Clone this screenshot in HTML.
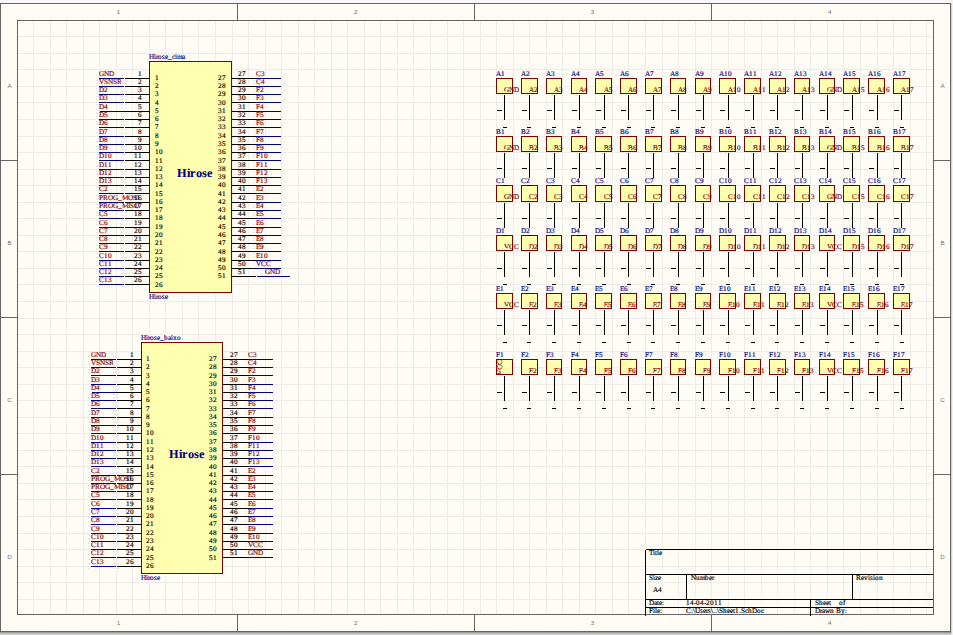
<!DOCTYPE html>
<html><head><meta charset="utf-8"><style>
html,body{margin:0;padding:0;background:#f8f8f8;overflow:hidden}
svg{display:block}
</style></head><body>
<svg width="953" height="635" viewBox="0 0 953 635">
<rect x="0" y="0" width="953" height="635" fill="#f8f8f8"/>
<rect x="0" y="632" width="951" height="1" fill="#9c9c9c"/>
<rect x="0" y="633" width="951" height="1" fill="#bababa"/>
<rect x="0" y="634" width="951" height="1" fill="#cfcfcf"/>
<rect x="951" y="3" width="1" height="632" fill="#d4d4d4"/>
<rect x="952" y="0" width="1" height="635" fill="#f2f2f2"/>
<rect x="0" y="3" width="951" height="629" fill="#fffcf6"/>
<path d="M33.5 21V614 M50.5 21V614 M66.5 21V614 M83.5 21V614 M99.5 21V614 M116.5 21V614 M132.5 21V614 M149.5 21V614 M165.5 21V614 M182.5 21V614 M198.5 21V614 M215.5 21V614 M232.5 21V614 M248.5 21V614 M265.5 21V614 M281.5 21V614 M298.5 21V614 M314.5 21V614 M331.5 21V614 M347.5 21V614 M364.5 21V614 M380.5 21V614 M397.5 21V614 M413.5 21V614 M430.5 21V614 M447.5 21V614 M463.5 21V614 M480.5 21V614 M496.5 21V614 M513.5 21V614 M529.5 21V614 M546.5 21V614 M562.5 21V614 M579.5 21V614 M595.5 21V614 M612.5 21V614 M628.5 21V614 M645.5 21V614 M662.5 21V614 M678.5 21V614 M695.5 21V614 M711.5 21V614 M728.5 21V614 M744.5 21V614 M761.5 21V614 M777.5 21V614 M794.5 21V614 M810.5 21V614 M827.5 21V614 M843.5 21V614 M860.5 21V614 M877.5 21V614 M893.5 21V614 M910.5 21V614 M926.5 21V614 M18 36.5H933 M18 53.5H933 M18 69.5H933 M18 86.5H933 M18 102.5H933 M18 119.5H933 M18 136.5H933 M18 152.5H933 M18 169.5H933 M18 185.5H933 M18 202.5H933 M18 218.5H933 M18 235.5H933 M18 251.5H933 M18 268.5H933 M18 284.5H933 M18 301.5H933 M18 318.5H933 M18 334.5H933 M18 351.5H933 M18 367.5H933 M18 384.5H933 M18 400.5H933 M18 417.5H933 M18 433.5H933 M18 450.5H933 M18 466.5H933 M18 483.5H933 M18 499.5H933 M18 516.5H933 M18 533.5H933 M18 549.5H933 M18 566.5H933 M18 582.5H933 M18 599.5H933" stroke="#edede9" stroke-width="1" fill="none" shape-rendering="crispEdges"/>
<path d="M0.5 3.5H950.5V631.5H0.5Z M17.5 20.5H933.5V614.5H17.5Z M237.5 3.5V20.5 M237.5 614.5V631.5 M474.5 3.5V20.5 M474.5 614.5V631.5 M711.5 3.5V20.5 M711.5 614.5V631.5 M0.5 160.5H17.5 M933.5 160.5H950.5 M0.5 317.5H17.5 M933.5 317.5H950.5 M0.5 474.5H17.5 M933.5 474.5H950.5" stroke="#646464" stroke-width="1" fill="none" shape-rendering="crispEdges"/>
<g font-family="Liberation Sans">
<text x="118.6" y="14" fill="#6e6e7a" font-size="6.2" text-anchor="middle">1</text>
<text x="118.6" y="624.8" fill="#6e6e7a" font-size="6.2" text-anchor="middle">1</text>
<text x="355.8" y="14" fill="#6e6e7a" font-size="6.2" text-anchor="middle">2</text>
<text x="355.8" y="624.8" fill="#6e6e7a" font-size="6.2" text-anchor="middle">2</text>
<text x="592.6" y="14" fill="#6e6e7a" font-size="6.2" text-anchor="middle">3</text>
<text x="592.6" y="624.8" fill="#6e6e7a" font-size="6.2" text-anchor="middle">3</text>
<text x="829.8" y="14" fill="#6e6e7a" font-size="6.2" text-anchor="middle">4</text>
<text x="829.8" y="624.8" fill="#6e6e7a" font-size="6.2" text-anchor="middle">4</text>
<text x="9.5" y="88" fill="#6e6e7a" font-size="6.2" text-anchor="middle">A</text>
<text x="942.5" y="88" fill="#6e6e7a" font-size="6.2" text-anchor="middle">A</text>
<text x="9.5" y="245" fill="#6e6e7a" font-size="6.2" text-anchor="middle">B</text>
<text x="942.5" y="245" fill="#6e6e7a" font-size="6.2" text-anchor="middle">B</text>
<text x="9.5" y="402" fill="#6e6e7a" font-size="6.2" text-anchor="middle">C</text>
<text x="942.5" y="402" fill="#6e6e7a" font-size="6.2" text-anchor="middle">C</text>
<text x="9.5" y="559" fill="#6e6e7a" font-size="6.2" text-anchor="middle">D</text>
<text x="942.5" y="559" fill="#6e6e7a" font-size="6.2" text-anchor="middle">D</text>
</g>
<g font-family="Liberation Serif" text-rendering="geometricPrecision">
<rect x="149.5" y="61.5" width="82" height="231" fill="#ffffb0" stroke="#800000" stroke-width="1" shape-rendering="crispEdges"/>
<text x="99 104 109" y="76" fill="#800000" stroke="#800000" stroke-width="0.16" font-size="7.2">GND</text>
<text x="138" y="76" fill="#000" stroke="#000" stroke-width="0.16" font-size="7.2">1</text>
<text x="155" y="80" fill="#000" stroke="#000" stroke-width="0.16" font-size="7.2">1</text>
<text x="99 104 108 113 117" y="84" fill="#800000" stroke="#800000" stroke-width="0.16" font-size="7.2">VSNSR</text>
<text x="138" y="84" fill="#000" stroke="#000" stroke-width="0.16" font-size="7.2">2</text>
<text x="155" y="88" fill="#000" stroke="#000" stroke-width="0.16" font-size="7.2">2</text>
<text x="99 104" y="92" fill="#800000" stroke="#800000" stroke-width="0.16" font-size="7.2">D2</text>
<text x="138" y="92" fill="#000" stroke="#000" stroke-width="0.16" font-size="7.2">3</text>
<text x="155" y="96" fill="#000" stroke="#000" stroke-width="0.16" font-size="7.2">3</text>
<text x="99 104" y="100" fill="#800000" stroke="#800000" stroke-width="0.16" font-size="7.2">D3</text>
<text x="138" y="100" fill="#000" stroke="#000" stroke-width="0.16" font-size="7.2">4</text>
<text x="155" y="105" fill="#000" stroke="#000" stroke-width="0.16" font-size="7.2">4</text>
<text x="99 104" y="109" fill="#800000" stroke="#800000" stroke-width="0.16" font-size="7.2">D4</text>
<text x="138" y="109" fill="#000" stroke="#000" stroke-width="0.16" font-size="7.2">5</text>
<text x="155" y="113" fill="#000" stroke="#000" stroke-width="0.16" font-size="7.2">5</text>
<text x="99 104" y="117" fill="#800000" stroke="#800000" stroke-width="0.16" font-size="7.2">D5</text>
<text x="138" y="117" fill="#000" stroke="#000" stroke-width="0.16" font-size="7.2">6</text>
<text x="155" y="121" fill="#000" stroke="#000" stroke-width="0.16" font-size="7.2">6</text>
<text x="99 104" y="125" fill="#800000" stroke="#800000" stroke-width="0.16" font-size="7.2">D6</text>
<text x="138" y="125" fill="#000" stroke="#000" stroke-width="0.16" font-size="7.2">7</text>
<text x="155" y="129" fill="#000" stroke="#000" stroke-width="0.16" font-size="7.2">7</text>
<text x="99 104" y="134" fill="#800000" stroke="#800000" stroke-width="0.16" font-size="7.2">D7</text>
<text x="138" y="134" fill="#000" stroke="#000" stroke-width="0.16" font-size="7.2">8</text>
<text x="155" y="138" fill="#000" stroke="#000" stroke-width="0.16" font-size="7.2">8</text>
<text x="99 104" y="142" fill="#800000" stroke="#800000" stroke-width="0.16" font-size="7.2">D8</text>
<text x="138" y="142" fill="#000" stroke="#000" stroke-width="0.16" font-size="7.2">9</text>
<text x="155" y="146" fill="#000" stroke="#000" stroke-width="0.16" font-size="7.2">9</text>
<text x="99 104" y="150" fill="#800000" stroke="#800000" stroke-width="0.16" font-size="7.2">D9</text>
<text x="134 138" y="150" fill="#000" stroke="#000" stroke-width="0.16" font-size="7.2">10</text>
<text x="155 159" y="154" fill="#000" stroke="#000" stroke-width="0.16" font-size="7.2">10</text>
<text x="99 104 108" y="158" fill="#800000" stroke="#800000" stroke-width="0.16" font-size="7.2">D10</text>
<text x="134 138" y="158" fill="#000" stroke="#000" stroke-width="0.16" font-size="7.2">11</text>
<text x="155 159" y="163" fill="#000" stroke="#000" stroke-width="0.16" font-size="7.2">11</text>
<text x="99 104 108" y="167" fill="#800000" stroke="#800000" stroke-width="0.16" font-size="7.2">D11</text>
<text x="134 138" y="167" fill="#000" stroke="#000" stroke-width="0.16" font-size="7.2">12</text>
<text x="155 159" y="171" fill="#000" stroke="#000" stroke-width="0.16" font-size="7.2">12</text>
<text x="99 104 108" y="175" fill="#800000" stroke="#800000" stroke-width="0.16" font-size="7.2">D12</text>
<text x="134 138" y="175" fill="#000" stroke="#000" stroke-width="0.16" font-size="7.2">13</text>
<text x="155 159" y="179" fill="#000" stroke="#000" stroke-width="0.16" font-size="7.2">13</text>
<text x="99 104 108" y="183" fill="#800000" stroke="#800000" stroke-width="0.16" font-size="7.2">D13</text>
<text x="134 138" y="183" fill="#000" stroke="#000" stroke-width="0.16" font-size="7.2">14</text>
<text x="155 159" y="187" fill="#000" stroke="#000" stroke-width="0.16" font-size="7.2">14</text>
<text x="99 104" y="191" fill="#800000" stroke="#800000" stroke-width="0.16" font-size="7.2">C2</text>
<text x="134 138" y="191" fill="#000" stroke="#000" stroke-width="0.16" font-size="7.2">15</text>
<text x="155 159" y="196" fill="#000" stroke="#000" stroke-width="0.16" font-size="7.2">15</text>
<text x="99 103 108 113 118 122 128 133 137" y="200" fill="#800000" stroke="#800000" stroke-width="0.16" font-size="7.2">PROG_MOSI</text>
<text x="134 138" y="200" fill="#000" stroke="#000" stroke-width="0.16" font-size="7.2">16</text>
<text x="155 159" y="204" fill="#000" stroke="#000" stroke-width="0.16" font-size="7.2">16</text>
<text x="99 103 108 113 118 122 128 130 134" y="208" fill="#800000" stroke="#800000" stroke-width="0.16" font-size="7.2">PROG_MISO</text>
<text x="134 138" y="208" fill="#000" stroke="#000" stroke-width="0.16" font-size="7.2">17</text>
<text x="155 159" y="212" fill="#000" stroke="#000" stroke-width="0.16" font-size="7.2">17</text>
<text x="99 104" y="216" fill="#800000" stroke="#800000" stroke-width="0.16" font-size="7.2">C5</text>
<text x="134 138" y="216" fill="#000" stroke="#000" stroke-width="0.16" font-size="7.2">18</text>
<text x="155 159" y="220" fill="#000" stroke="#000" stroke-width="0.16" font-size="7.2">18</text>
<text x="99 104" y="225" fill="#800000" stroke="#800000" stroke-width="0.16" font-size="7.2">C6</text>
<text x="134 138" y="225" fill="#000" stroke="#000" stroke-width="0.16" font-size="7.2">19</text>
<text x="155 159" y="229" fill="#000" stroke="#000" stroke-width="0.16" font-size="7.2">19</text>
<text x="99 104" y="233" fill="#800000" stroke="#800000" stroke-width="0.16" font-size="7.2">C7</text>
<text x="134 138" y="233" fill="#000" stroke="#000" stroke-width="0.16" font-size="7.2">20</text>
<text x="155 159" y="237" fill="#000" stroke="#000" stroke-width="0.16" font-size="7.2">20</text>
<text x="99 104" y="241" fill="#800000" stroke="#800000" stroke-width="0.16" font-size="7.2">C8</text>
<text x="134 138" y="241" fill="#000" stroke="#000" stroke-width="0.16" font-size="7.2">21</text>
<text x="155 159" y="245" fill="#000" stroke="#000" stroke-width="0.16" font-size="7.2">21</text>
<text x="99 104" y="249" fill="#800000" stroke="#800000" stroke-width="0.16" font-size="7.2">C9</text>
<text x="134 138" y="249" fill="#000" stroke="#000" stroke-width="0.16" font-size="7.2">22</text>
<text x="155 159" y="254" fill="#000" stroke="#000" stroke-width="0.16" font-size="7.2">22</text>
<text x="99 104 108" y="258" fill="#800000" stroke="#800000" stroke-width="0.16" font-size="7.2">C10</text>
<text x="134 138" y="258" fill="#000" stroke="#000" stroke-width="0.16" font-size="7.2">23</text>
<text x="155 159" y="262" fill="#000" stroke="#000" stroke-width="0.16" font-size="7.2">23</text>
<text x="99 104 108" y="266" fill="#800000" stroke="#800000" stroke-width="0.16" font-size="7.2">C11</text>
<text x="134 138" y="266" fill="#000" stroke="#000" stroke-width="0.16" font-size="7.2">24</text>
<text x="155 159" y="270" fill="#000" stroke="#000" stroke-width="0.16" font-size="7.2">24</text>
<text x="99 104 108" y="274" fill="#800000" stroke="#800000" stroke-width="0.16" font-size="7.2">C12</text>
<text x="134 138" y="274" fill="#000" stroke="#000" stroke-width="0.16" font-size="7.2">25</text>
<text x="155 159" y="278" fill="#000" stroke="#000" stroke-width="0.16" font-size="7.2">25</text>
<text x="99 104 108" y="282" fill="#800000" stroke="#800000" stroke-width="0.16" font-size="7.2">C13</text>
<text x="134 138" y="282" fill="#000" stroke="#000" stroke-width="0.16" font-size="7.2">26</text>
<text x="155 159" y="287" fill="#000" stroke="#000" stroke-width="0.16" font-size="7.2">26</text>
<text x="256 261" y="76" fill="#800000" stroke="#800000" stroke-width="0.16" font-size="7.2">C3</text>
<text x="238 242" y="76" fill="#000" stroke="#000" stroke-width="0.16" font-size="7.2">27</text>
<text x="218 222" y="80" fill="#000" stroke="#000" stroke-width="0.16" font-size="7.2">27</text>
<text x="256 261" y="84" fill="#800000" stroke="#800000" stroke-width="0.16" font-size="7.2">C4</text>
<text x="238 242" y="84" fill="#000" stroke="#000" stroke-width="0.16" font-size="7.2">28</text>
<text x="218 222" y="88" fill="#000" stroke="#000" stroke-width="0.16" font-size="7.2">28</text>
<text x="256 260" y="92" fill="#800000" stroke="#800000" stroke-width="0.16" font-size="7.2">F2</text>
<text x="238 242" y="92" fill="#000" stroke="#000" stroke-width="0.16" font-size="7.2">29</text>
<text x="218 222" y="96" fill="#000" stroke="#000" stroke-width="0.16" font-size="7.2">29</text>
<text x="256 260" y="100" fill="#800000" stroke="#800000" stroke-width="0.16" font-size="7.2">F3</text>
<text x="238 242" y="100" fill="#000" stroke="#000" stroke-width="0.16" font-size="7.2">30</text>
<text x="218 222" y="105" fill="#000" stroke="#000" stroke-width="0.16" font-size="7.2">30</text>
<text x="256 260" y="109" fill="#800000" stroke="#800000" stroke-width="0.16" font-size="7.2">F4</text>
<text x="238 242" y="109" fill="#000" stroke="#000" stroke-width="0.16" font-size="7.2">31</text>
<text x="218 222" y="113" fill="#000" stroke="#000" stroke-width="0.16" font-size="7.2">31</text>
<text x="256 260" y="117" fill="#800000" stroke="#800000" stroke-width="0.16" font-size="7.2">F5</text>
<text x="238 242" y="117" fill="#000" stroke="#000" stroke-width="0.16" font-size="7.2">32</text>
<text x="218 222" y="121" fill="#000" stroke="#000" stroke-width="0.16" font-size="7.2">32</text>
<text x="256 260" y="125" fill="#800000" stroke="#800000" stroke-width="0.16" font-size="7.2">F6</text>
<text x="238 242" y="125" fill="#000" stroke="#000" stroke-width="0.16" font-size="7.2">33</text>
<text x="218 222" y="129" fill="#000" stroke="#000" stroke-width="0.16" font-size="7.2">33</text>
<text x="256 260" y="134" fill="#800000" stroke="#800000" stroke-width="0.16" font-size="7.2">F7</text>
<text x="238 242" y="134" fill="#000" stroke="#000" stroke-width="0.16" font-size="7.2">34</text>
<text x="218 222" y="138" fill="#000" stroke="#000" stroke-width="0.16" font-size="7.2">34</text>
<text x="256 260" y="142" fill="#800000" stroke="#800000" stroke-width="0.16" font-size="7.2">F8</text>
<text x="238 242" y="142" fill="#000" stroke="#000" stroke-width="0.16" font-size="7.2">35</text>
<text x="218 222" y="146" fill="#000" stroke="#000" stroke-width="0.16" font-size="7.2">35</text>
<text x="256 260" y="150" fill="#800000" stroke="#800000" stroke-width="0.16" font-size="7.2">F9</text>
<text x="238 242" y="150" fill="#000" stroke="#000" stroke-width="0.16" font-size="7.2">36</text>
<text x="218 222" y="154" fill="#000" stroke="#000" stroke-width="0.16" font-size="7.2">36</text>
<text x="256 260 264" y="158" fill="#800000" stroke="#800000" stroke-width="0.16" font-size="7.2">F10</text>
<text x="238 242" y="158" fill="#000" stroke="#000" stroke-width="0.16" font-size="7.2">37</text>
<text x="218 222" y="163" fill="#000" stroke="#000" stroke-width="0.16" font-size="7.2">37</text>
<text x="256 260 264" y="167" fill="#800000" stroke="#800000" stroke-width="0.16" font-size="7.2">F11</text>
<text x="238 242" y="167" fill="#000" stroke="#000" stroke-width="0.16" font-size="7.2">38</text>
<text x="218 222" y="171" fill="#000" stroke="#000" stroke-width="0.16" font-size="7.2">38</text>
<text x="256 260 264" y="175" fill="#800000" stroke="#800000" stroke-width="0.16" font-size="7.2">F12</text>
<text x="238 242" y="175" fill="#000" stroke="#000" stroke-width="0.16" font-size="7.2">39</text>
<text x="218 222" y="179" fill="#000" stroke="#000" stroke-width="0.16" font-size="7.2">39</text>
<text x="256 260 264" y="183" fill="#800000" stroke="#800000" stroke-width="0.16" font-size="7.2">F13</text>
<text x="238 242" y="183" fill="#000" stroke="#000" stroke-width="0.16" font-size="7.2">40</text>
<text x="218 222" y="187" fill="#000" stroke="#000" stroke-width="0.16" font-size="7.2">40</text>
<text x="256 260" y="191" fill="#800000" stroke="#800000" stroke-width="0.16" font-size="7.2">E2</text>
<text x="238 242" y="191" fill="#000" stroke="#000" stroke-width="0.16" font-size="7.2">41</text>
<text x="218 222" y="196" fill="#000" stroke="#000" stroke-width="0.16" font-size="7.2">41</text>
<text x="256 260" y="200" fill="#800000" stroke="#800000" stroke-width="0.16" font-size="7.2">E3</text>
<text x="238 242" y="200" fill="#000" stroke="#000" stroke-width="0.16" font-size="7.2">42</text>
<text x="218 222" y="204" fill="#000" stroke="#000" stroke-width="0.16" font-size="7.2">42</text>
<text x="256 260" y="208" fill="#800000" stroke="#800000" stroke-width="0.16" font-size="7.2">E4</text>
<text x="238 242" y="208" fill="#000" stroke="#000" stroke-width="0.16" font-size="7.2">43</text>
<text x="218 222" y="212" fill="#000" stroke="#000" stroke-width="0.16" font-size="7.2">43</text>
<text x="256 260" y="216" fill="#800000" stroke="#800000" stroke-width="0.16" font-size="7.2">E5</text>
<text x="238 242" y="216" fill="#000" stroke="#000" stroke-width="0.16" font-size="7.2">44</text>
<text x="218 222" y="220" fill="#000" stroke="#000" stroke-width="0.16" font-size="7.2">44</text>
<text x="256 260" y="225" fill="#800000" stroke="#800000" stroke-width="0.16" font-size="7.2">E6</text>
<text x="238 242" y="225" fill="#000" stroke="#000" stroke-width="0.16" font-size="7.2">45</text>
<text x="218 222" y="229" fill="#000" stroke="#000" stroke-width="0.16" font-size="7.2">45</text>
<text x="256 260" y="233" fill="#800000" stroke="#800000" stroke-width="0.16" font-size="7.2">E7</text>
<text x="238 242" y="233" fill="#000" stroke="#000" stroke-width="0.16" font-size="7.2">46</text>
<text x="218 222" y="237" fill="#000" stroke="#000" stroke-width="0.16" font-size="7.2">46</text>
<text x="256 260" y="241" fill="#800000" stroke="#800000" stroke-width="0.16" font-size="7.2">E8</text>
<text x="238 242" y="241" fill="#000" stroke="#000" stroke-width="0.16" font-size="7.2">47</text>
<text x="218 222" y="245" fill="#000" stroke="#000" stroke-width="0.16" font-size="7.2">47</text>
<text x="256 260" y="249" fill="#800000" stroke="#800000" stroke-width="0.16" font-size="7.2">E9</text>
<text x="238 242" y="249" fill="#000" stroke="#000" stroke-width="0.16" font-size="7.2">48</text>
<text x="218 222" y="254" fill="#000" stroke="#000" stroke-width="0.16" font-size="7.2">48</text>
<text x="256 260 264" y="258" fill="#800000" stroke="#800000" stroke-width="0.16" font-size="7.2">E10</text>
<text x="238 242" y="258" fill="#000" stroke="#000" stroke-width="0.16" font-size="7.2">49</text>
<text x="218 222" y="262" fill="#000" stroke="#000" stroke-width="0.16" font-size="7.2">49</text>
<text x="256 261 266" y="266" fill="#800000" stroke="#800000" stroke-width="0.16" font-size="7.2">VCC</text>
<text x="238 242" y="266" fill="#000" stroke="#000" stroke-width="0.16" font-size="7.2">50</text>
<text x="218 222" y="270" fill="#000" stroke="#000" stroke-width="0.16" font-size="7.2">50</text>
<text x="265 270 275" y="274" fill="#800000" stroke="#800000" stroke-width="0.16" font-size="7.2">GND</text>
<text x="238 242" y="274" fill="#000" stroke="#000" stroke-width="0.16" font-size="7.2">51</text>
<text x="218 222" y="278" fill="#000" stroke="#000" stroke-width="0.16" font-size="7.2">51</text>
<path d="M96 75h2v1h-2z M96 80h2v1h-2z M121 75h2v1h-2z M121 80h2v1h-2z M125 75h2v1h-2z M125 80h2v1h-2z M253 75h2v1h-2z M253 80h2v1h-2z M96 83h2v1h-2z M96 88h2v1h-2z M121 83h2v1h-2z M121 88h2v1h-2z M125 83h2v1h-2z M125 88h2v1h-2z M253 83h2v1h-2z M253 88h2v1h-2z M96 91h2v1h-2z M96 96h2v1h-2z M121 91h2v1h-2z M121 96h2v1h-2z M125 91h2v1h-2z M125 96h2v1h-2z M253 91h2v1h-2z M253 96h2v1h-2z M96 99h2v1h-2z M96 104h2v1h-2z M121 99h2v1h-2z M121 104h2v1h-2z M125 99h2v1h-2z M125 104h2v1h-2z M253 99h2v1h-2z M253 104h2v1h-2z M96 108h2v1h-2z M96 113h2v1h-2z M121 108h2v1h-2z M121 113h2v1h-2z M125 108h2v1h-2z M125 113h2v1h-2z M253 108h2v1h-2z M253 113h2v1h-2z M96 116h2v1h-2z M96 121h2v1h-2z M121 116h2v1h-2z M121 121h2v1h-2z M125 116h2v1h-2z M125 121h2v1h-2z M253 116h2v1h-2z M253 121h2v1h-2z M96 124h2v1h-2z M96 129h2v1h-2z M121 124h2v1h-2z M121 129h2v1h-2z M125 124h2v1h-2z M125 129h2v1h-2z M253 124h2v1h-2z M253 129h2v1h-2z M96 133h2v1h-2z M96 138h2v1h-2z M121 133h2v1h-2z M121 138h2v1h-2z M125 133h2v1h-2z M125 138h2v1h-2z M253 133h2v1h-2z M253 138h2v1h-2z M96 141h2v1h-2z M96 146h2v1h-2z M121 141h2v1h-2z M121 146h2v1h-2z M125 141h2v1h-2z M125 146h2v1h-2z M253 141h2v1h-2z M253 146h2v1h-2z M96 149h2v1h-2z M96 154h2v1h-2z M121 149h2v1h-2z M121 154h2v1h-2z M125 149h2v1h-2z M125 154h2v1h-2z M253 149h2v1h-2z M253 154h2v1h-2z M96 157h2v1h-2z M96 162h2v1h-2z M121 157h2v1h-2z M121 162h2v1h-2z M125 157h2v1h-2z M125 162h2v1h-2z M253 157h2v1h-2z M253 162h2v1h-2z M96 166h2v1h-2z M96 171h2v1h-2z M121 166h2v1h-2z M121 171h2v1h-2z M125 166h2v1h-2z M125 171h2v1h-2z M253 166h2v1h-2z M253 171h2v1h-2z M96 174h2v1h-2z M96 179h2v1h-2z M121 174h2v1h-2z M121 179h2v1h-2z M125 174h2v1h-2z M125 179h2v1h-2z M253 174h2v1h-2z M253 179h2v1h-2z M96 182h2v1h-2z M96 187h2v1h-2z M121 182h2v1h-2z M121 187h2v1h-2z M125 182h2v1h-2z M125 187h2v1h-2z M253 182h2v1h-2z M253 187h2v1h-2z M96 190h2v1h-2z M96 195h2v1h-2z M121 190h2v1h-2z M121 195h2v1h-2z M125 190h2v1h-2z M125 195h2v1h-2z M253 190h2v1h-2z M253 195h2v1h-2z M96 199h2v1h-2z M96 204h2v1h-2z M121 199h2v1h-2z M121 204h2v1h-2z M125 199h2v1h-2z M125 204h2v1h-2z M253 199h2v1h-2z M253 204h2v1h-2z M96 207h2v1h-2z M96 212h2v1h-2z M121 207h2v1h-2z M121 212h2v1h-2z M125 207h2v1h-2z M125 212h2v1h-2z M253 207h2v1h-2z M253 212h2v1h-2z M96 215h2v1h-2z M96 220h2v1h-2z M121 215h2v1h-2z M121 220h2v1h-2z M125 215h2v1h-2z M125 220h2v1h-2z M253 215h2v1h-2z M253 220h2v1h-2z M96 224h2v1h-2z M96 229h2v1h-2z M121 224h2v1h-2z M121 229h2v1h-2z M125 224h2v1h-2z M125 229h2v1h-2z M253 224h2v1h-2z M253 229h2v1h-2z M96 232h2v1h-2z M96 237h2v1h-2z M121 232h2v1h-2z M121 237h2v1h-2z M125 232h2v1h-2z M125 237h2v1h-2z M253 232h2v1h-2z M253 237h2v1h-2z M96 240h2v1h-2z M96 245h2v1h-2z M121 240h2v1h-2z M121 245h2v1h-2z M125 240h2v1h-2z M125 245h2v1h-2z M253 240h2v1h-2z M253 245h2v1h-2z M96 248h2v1h-2z M96 253h2v1h-2z M121 248h2v1h-2z M121 253h2v1h-2z M125 248h2v1h-2z M125 253h2v1h-2z M253 248h2v1h-2z M253 253h2v1h-2z M96 257h2v1h-2z M96 262h2v1h-2z M121 257h2v1h-2z M121 262h2v1h-2z M125 257h2v1h-2z M125 262h2v1h-2z M253 257h2v1h-2z M253 262h2v1h-2z M96 265h2v1h-2z M96 270h2v1h-2z M121 265h2v1h-2z M121 270h2v1h-2z M125 265h2v1h-2z M125 270h2v1h-2z M253 265h2v1h-2z M253 270h2v1h-2z M96 273h2v1h-2z M96 278h2v1h-2z M121 273h2v1h-2z M121 278h2v1h-2z M125 273h2v1h-2z M125 278h2v1h-2z M253 273h2v1h-2z M253 278h2v1h-2z M96 281h2v1h-2z M96 286h2v1h-2z M121 281h2v1h-2z M121 286h2v1h-2z M125 281h2v1h-2z M125 286h2v1h-2z" fill="#e0e8f4"/>
<path d="M99 78.5H124 M99 86.5H124 M99 94.5H124 M99 102.5H124 M100 111.5H125 M99 119.5H124 M99 127.5H124 M99 136.5H124 M99 144.5H124 M99 152.5H124 M99 160.5H124 M99 169.5H124 M99 177.5H124 M99 185.5H124 M99 193.5H124 M99 202.5H124 M99 210.5H124 M99 218.5H124 M99 227.5H124 M99 235.5H124 M99 243.5H124 M99 251.5H124 M99 260.5H124 M99 268.5H124 M99 276.5H124 M99 284.5H124 M256 78.5H281 M256 86.5H281 M256 94.5H281 M256 102.5H281 M256 111.5H281 M256 119.5H281 M256 127.5H281 M256 136.5H281 M256 144.5H281 M256 152.5H281 M256 160.5H281 M256 169.5H281 M256 177.5H281 M256 185.5H281 M256 193.5H281 M256 202.5H281 M256 210.5H281 M256 218.5H281 M256 227.5H281 M256 235.5H281 M256 243.5H281 M256 251.5H281 M256 260.5H281 M256 268.5H281 M257 276.5H290" stroke="#000080" stroke-width="1" fill="none" shape-rendering="crispEdges"/>
<path d="M125 78.5H149.5 M125 86.5H149.5 M125 94.5H149.5 M125 102.5H149.5 M125 111.5H149.5 M125 119.5H149.5 M125 127.5H149.5 M125 136.5H149.5 M125 144.5H149.5 M125 152.5H149.5 M125 160.5H149.5 M125 169.5H149.5 M125 177.5H149.5 M125 185.5H149.5 M125 193.5H149.5 M125 202.5H149.5 M125 210.5H149.5 M125 218.5H149.5 M125 227.5H149.5 M125 235.5H149.5 M125 243.5H149.5 M125 251.5H149.5 M125 260.5H149.5 M125 268.5H149.5 M125 276.5H149.5 M125 284.5H149.5 M231.5 78.5H256 M231.5 86.5H256 M231.5 94.5H256 M231.5 102.5H256 M231.5 111.5H256 M231.5 119.5H256 M231.5 127.5H256 M231.5 136.5H256 M231.5 144.5H256 M231.5 152.5H256 M231.5 160.5H256 M231.5 169.5H256 M231.5 177.5H256 M231.5 185.5H256 M231.5 193.5H256 M231.5 202.5H256 M231.5 210.5H256 M231.5 218.5H256 M231.5 227.5H256 M231.5 235.5H256 M231.5 243.5H256 M231.5 251.5H256 M231.5 260.5H256 M231.5 268.5H256 M231.5 276.5H256" stroke="#000" stroke-width="1" fill="none" shape-rendering="crispEdges"/>
<text x="177 187 190 196 202 207" y="177" fill="#000080" stroke="#000080" stroke-width="0.1" font-size="12.3" font-weight="bold">Hirose</text>
<text x="149 154 156 158 162 165 168 172 175 177 182" y="58.7" fill="#000080" stroke="#000080" stroke-width="0.16" font-size="7.2">Hirose_cima</text>
<text x="149 154 156 158 162 165" y="299" fill="#000080" stroke="#000080" stroke-width="0.16" font-size="7.2">Hirose</text>
<rect x="141.5" y="342.5" width="81" height="231" fill="#ffffb0" stroke="#800000" stroke-width="1" shape-rendering="crispEdges"/>
<text x="91 96 101" y="357" fill="#800000" stroke="#800000" stroke-width="0.16" font-size="7.2">GND</text>
<text x="130" y="357" fill="#000" stroke="#000" stroke-width="0.16" font-size="7.2">1</text>
<text x="146" y="361" fill="#000" stroke="#000" stroke-width="0.16" font-size="7.2">1</text>
<text x="91 96 100 105 109" y="365" fill="#800000" stroke="#800000" stroke-width="0.16" font-size="7.2">VSNSR</text>
<text x="130" y="365" fill="#000" stroke="#000" stroke-width="0.16" font-size="7.2">2</text>
<text x="146" y="369" fill="#000" stroke="#000" stroke-width="0.16" font-size="7.2">2</text>
<text x="91 96" y="373" fill="#800000" stroke="#800000" stroke-width="0.16" font-size="7.2">D2</text>
<text x="130" y="373" fill="#000" stroke="#000" stroke-width="0.16" font-size="7.2">3</text>
<text x="146" y="378" fill="#000" stroke="#000" stroke-width="0.16" font-size="7.2">3</text>
<text x="91 96" y="382" fill="#800000" stroke="#800000" stroke-width="0.16" font-size="7.2">D3</text>
<text x="130" y="382" fill="#000" stroke="#000" stroke-width="0.16" font-size="7.2">4</text>
<text x="146" y="386" fill="#000" stroke="#000" stroke-width="0.16" font-size="7.2">4</text>
<text x="91 96" y="390" fill="#800000" stroke="#800000" stroke-width="0.16" font-size="7.2">D4</text>
<text x="130" y="390" fill="#000" stroke="#000" stroke-width="0.16" font-size="7.2">5</text>
<text x="146" y="394" fill="#000" stroke="#000" stroke-width="0.16" font-size="7.2">5</text>
<text x="91 96" y="398" fill="#800000" stroke="#800000" stroke-width="0.16" font-size="7.2">D5</text>
<text x="130" y="398" fill="#000" stroke="#000" stroke-width="0.16" font-size="7.2">6</text>
<text x="146" y="402" fill="#000" stroke="#000" stroke-width="0.16" font-size="7.2">6</text>
<text x="91 96" y="406" fill="#800000" stroke="#800000" stroke-width="0.16" font-size="7.2">D6</text>
<text x="130" y="406" fill="#000" stroke="#000" stroke-width="0.16" font-size="7.2">7</text>
<text x="146" y="411" fill="#000" stroke="#000" stroke-width="0.16" font-size="7.2">7</text>
<text x="91 96" y="415" fill="#800000" stroke="#800000" stroke-width="0.16" font-size="7.2">D7</text>
<text x="130" y="415" fill="#000" stroke="#000" stroke-width="0.16" font-size="7.2">8</text>
<text x="146" y="419" fill="#000" stroke="#000" stroke-width="0.16" font-size="7.2">8</text>
<text x="91 96" y="423" fill="#800000" stroke="#800000" stroke-width="0.16" font-size="7.2">D8</text>
<text x="130" y="423" fill="#000" stroke="#000" stroke-width="0.16" font-size="7.2">9</text>
<text x="146" y="427" fill="#000" stroke="#000" stroke-width="0.16" font-size="7.2">9</text>
<text x="91 96" y="431" fill="#800000" stroke="#800000" stroke-width="0.16" font-size="7.2">D9</text>
<text x="126 130" y="431" fill="#000" stroke="#000" stroke-width="0.16" font-size="7.2">10</text>
<text x="146 150" y="435" fill="#000" stroke="#000" stroke-width="0.16" font-size="7.2">10</text>
<text x="91 96 100" y="440" fill="#800000" stroke="#800000" stroke-width="0.16" font-size="7.2">D10</text>
<text x="126 130" y="440" fill="#000" stroke="#000" stroke-width="0.16" font-size="7.2">11</text>
<text x="146 150" y="444" fill="#000" stroke="#000" stroke-width="0.16" font-size="7.2">11</text>
<text x="91 96 100" y="448" fill="#800000" stroke="#800000" stroke-width="0.16" font-size="7.2">D11</text>
<text x="126 130" y="448" fill="#000" stroke="#000" stroke-width="0.16" font-size="7.2">12</text>
<text x="146 150" y="452" fill="#000" stroke="#000" stroke-width="0.16" font-size="7.2">12</text>
<text x="91 96 100" y="456" fill="#800000" stroke="#800000" stroke-width="0.16" font-size="7.2">D12</text>
<text x="126 130" y="456" fill="#000" stroke="#000" stroke-width="0.16" font-size="7.2">13</text>
<text x="146 150" y="460" fill="#000" stroke="#000" stroke-width="0.16" font-size="7.2">13</text>
<text x="91 96 100" y="464" fill="#800000" stroke="#800000" stroke-width="0.16" font-size="7.2">D13</text>
<text x="126 130" y="464" fill="#000" stroke="#000" stroke-width="0.16" font-size="7.2">14</text>
<text x="146 150" y="469" fill="#000" stroke="#000" stroke-width="0.16" font-size="7.2">14</text>
<text x="91 96" y="473" fill="#800000" stroke="#800000" stroke-width="0.16" font-size="7.2">C2</text>
<text x="126 130" y="473" fill="#000" stroke="#000" stroke-width="0.16" font-size="7.2">15</text>
<text x="146 150" y="477" fill="#000" stroke="#000" stroke-width="0.16" font-size="7.2">15</text>
<text x="91 95 100 105 110 114 120 125 129" y="481" fill="#800000" stroke="#800000" stroke-width="0.16" font-size="7.2">PROG_MOSI</text>
<text x="126 130" y="481" fill="#000" stroke="#000" stroke-width="0.16" font-size="7.2">16</text>
<text x="146 150" y="485" fill="#000" stroke="#000" stroke-width="0.16" font-size="7.2">16</text>
<text x="91 95 100 105 110 114 120 122 126" y="489" fill="#800000" stroke="#800000" stroke-width="0.16" font-size="7.2">PROG_MISO</text>
<text x="126 130" y="489" fill="#000" stroke="#000" stroke-width="0.16" font-size="7.2">17</text>
<text x="146 150" y="493" fill="#000" stroke="#000" stroke-width="0.16" font-size="7.2">17</text>
<text x="91 96" y="497" fill="#800000" stroke="#800000" stroke-width="0.16" font-size="7.2">C5</text>
<text x="126 130" y="497" fill="#000" stroke="#000" stroke-width="0.16" font-size="7.2">18</text>
<text x="146 150" y="502" fill="#000" stroke="#000" stroke-width="0.16" font-size="7.2">18</text>
<text x="91 96" y="506" fill="#800000" stroke="#800000" stroke-width="0.16" font-size="7.2">C6</text>
<text x="126 130" y="506" fill="#000" stroke="#000" stroke-width="0.16" font-size="7.2">19</text>
<text x="146 150" y="510" fill="#000" stroke="#000" stroke-width="0.16" font-size="7.2">19</text>
<text x="91 96" y="514" fill="#800000" stroke="#800000" stroke-width="0.16" font-size="7.2">C7</text>
<text x="126 130" y="514" fill="#000" stroke="#000" stroke-width="0.16" font-size="7.2">20</text>
<text x="146 150" y="518" fill="#000" stroke="#000" stroke-width="0.16" font-size="7.2">20</text>
<text x="91 96" y="522" fill="#800000" stroke="#800000" stroke-width="0.16" font-size="7.2">C8</text>
<text x="126 130" y="522" fill="#000" stroke="#000" stroke-width="0.16" font-size="7.2">21</text>
<text x="146 150" y="526" fill="#000" stroke="#000" stroke-width="0.16" font-size="7.2">21</text>
<text x="91 96" y="531" fill="#800000" stroke="#800000" stroke-width="0.16" font-size="7.2">C9</text>
<text x="126 130" y="531" fill="#000" stroke="#000" stroke-width="0.16" font-size="7.2">22</text>
<text x="146 150" y="535" fill="#000" stroke="#000" stroke-width="0.16" font-size="7.2">22</text>
<text x="91 96 100" y="539" fill="#800000" stroke="#800000" stroke-width="0.16" font-size="7.2">C10</text>
<text x="126 130" y="539" fill="#000" stroke="#000" stroke-width="0.16" font-size="7.2">23</text>
<text x="146 150" y="543" fill="#000" stroke="#000" stroke-width="0.16" font-size="7.2">23</text>
<text x="91 96 100" y="547" fill="#800000" stroke="#800000" stroke-width="0.16" font-size="7.2">C11</text>
<text x="126 130" y="547" fill="#000" stroke="#000" stroke-width="0.16" font-size="7.2">24</text>
<text x="146 150" y="551" fill="#000" stroke="#000" stroke-width="0.16" font-size="7.2">24</text>
<text x="91 96 100" y="555" fill="#800000" stroke="#800000" stroke-width="0.16" font-size="7.2">C12</text>
<text x="126 130" y="555" fill="#000" stroke="#000" stroke-width="0.16" font-size="7.2">25</text>
<text x="146 150" y="560" fill="#000" stroke="#000" stroke-width="0.16" font-size="7.2">25</text>
<text x="91 96 100" y="564" fill="#800000" stroke="#800000" stroke-width="0.16" font-size="7.2">C13</text>
<text x="126 130" y="564" fill="#000" stroke="#000" stroke-width="0.16" font-size="7.2">26</text>
<text x="146 150" y="568" fill="#000" stroke="#000" stroke-width="0.16" font-size="7.2">26</text>
<text x="248 253" y="357" fill="#800000" stroke="#800000" stroke-width="0.16" font-size="7.2">C3</text>
<text x="230 234" y="357" fill="#000" stroke="#000" stroke-width="0.16" font-size="7.2">27</text>
<text x="209 213" y="361" fill="#000" stroke="#000" stroke-width="0.16" font-size="7.2">27</text>
<text x="248 253" y="365" fill="#800000" stroke="#800000" stroke-width="0.16" font-size="7.2">C4</text>
<text x="230 234" y="365" fill="#000" stroke="#000" stroke-width="0.16" font-size="7.2">28</text>
<text x="209 213" y="369" fill="#000" stroke="#000" stroke-width="0.16" font-size="7.2">28</text>
<text x="248 252" y="373" fill="#800000" stroke="#800000" stroke-width="0.16" font-size="7.2">F2</text>
<text x="230 234" y="373" fill="#000" stroke="#000" stroke-width="0.16" font-size="7.2">29</text>
<text x="209 213" y="378" fill="#000" stroke="#000" stroke-width="0.16" font-size="7.2">29</text>
<text x="248 252" y="382" fill="#800000" stroke="#800000" stroke-width="0.16" font-size="7.2">F3</text>
<text x="230 234" y="382" fill="#000" stroke="#000" stroke-width="0.16" font-size="7.2">30</text>
<text x="209 213" y="386" fill="#000" stroke="#000" stroke-width="0.16" font-size="7.2">30</text>
<text x="248 252" y="390" fill="#800000" stroke="#800000" stroke-width="0.16" font-size="7.2">F4</text>
<text x="230 234" y="390" fill="#000" stroke="#000" stroke-width="0.16" font-size="7.2">31</text>
<text x="209 213" y="394" fill="#000" stroke="#000" stroke-width="0.16" font-size="7.2">31</text>
<text x="248 252" y="398" fill="#800000" stroke="#800000" stroke-width="0.16" font-size="7.2">F5</text>
<text x="230 234" y="398" fill="#000" stroke="#000" stroke-width="0.16" font-size="7.2">32</text>
<text x="209 213" y="402" fill="#000" stroke="#000" stroke-width="0.16" font-size="7.2">32</text>
<text x="248 252" y="406" fill="#800000" stroke="#800000" stroke-width="0.16" font-size="7.2">F6</text>
<text x="230 234" y="406" fill="#000" stroke="#000" stroke-width="0.16" font-size="7.2">33</text>
<text x="209 213" y="411" fill="#000" stroke="#000" stroke-width="0.16" font-size="7.2">33</text>
<text x="248 252" y="415" fill="#800000" stroke="#800000" stroke-width="0.16" font-size="7.2">F7</text>
<text x="230 234" y="415" fill="#000" stroke="#000" stroke-width="0.16" font-size="7.2">34</text>
<text x="209 213" y="419" fill="#000" stroke="#000" stroke-width="0.16" font-size="7.2">34</text>
<text x="248 252" y="423" fill="#800000" stroke="#800000" stroke-width="0.16" font-size="7.2">F8</text>
<text x="230 234" y="423" fill="#000" stroke="#000" stroke-width="0.16" font-size="7.2">35</text>
<text x="209 213" y="427" fill="#000" stroke="#000" stroke-width="0.16" font-size="7.2">35</text>
<text x="248 252" y="431" fill="#800000" stroke="#800000" stroke-width="0.16" font-size="7.2">F9</text>
<text x="230 234" y="431" fill="#000" stroke="#000" stroke-width="0.16" font-size="7.2">36</text>
<text x="209 213" y="435" fill="#000" stroke="#000" stroke-width="0.16" font-size="7.2">36</text>
<text x="248 252 256" y="440" fill="#800000" stroke="#800000" stroke-width="0.16" font-size="7.2">F10</text>
<text x="230 234" y="440" fill="#000" stroke="#000" stroke-width="0.16" font-size="7.2">37</text>
<text x="209 213" y="444" fill="#000" stroke="#000" stroke-width="0.16" font-size="7.2">37</text>
<text x="248 252 256" y="448" fill="#800000" stroke="#800000" stroke-width="0.16" font-size="7.2">F11</text>
<text x="230 234" y="448" fill="#000" stroke="#000" stroke-width="0.16" font-size="7.2">38</text>
<text x="209 213" y="452" fill="#000" stroke="#000" stroke-width="0.16" font-size="7.2">38</text>
<text x="248 252 256" y="456" fill="#800000" stroke="#800000" stroke-width="0.16" font-size="7.2">F12</text>
<text x="230 234" y="456" fill="#000" stroke="#000" stroke-width="0.16" font-size="7.2">39</text>
<text x="209 213" y="460" fill="#000" stroke="#000" stroke-width="0.16" font-size="7.2">39</text>
<text x="248 252 256" y="464" fill="#800000" stroke="#800000" stroke-width="0.16" font-size="7.2">F13</text>
<text x="230 234" y="464" fill="#000" stroke="#000" stroke-width="0.16" font-size="7.2">40</text>
<text x="209 213" y="469" fill="#000" stroke="#000" stroke-width="0.16" font-size="7.2">40</text>
<text x="248 252" y="473" fill="#800000" stroke="#800000" stroke-width="0.16" font-size="7.2">E2</text>
<text x="230 234" y="473" fill="#000" stroke="#000" stroke-width="0.16" font-size="7.2">41</text>
<text x="209 213" y="477" fill="#000" stroke="#000" stroke-width="0.16" font-size="7.2">41</text>
<text x="248 252" y="481" fill="#800000" stroke="#800000" stroke-width="0.16" font-size="7.2">E3</text>
<text x="230 234" y="481" fill="#000" stroke="#000" stroke-width="0.16" font-size="7.2">42</text>
<text x="209 213" y="485" fill="#000" stroke="#000" stroke-width="0.16" font-size="7.2">42</text>
<text x="248 252" y="489" fill="#800000" stroke="#800000" stroke-width="0.16" font-size="7.2">E4</text>
<text x="230 234" y="489" fill="#000" stroke="#000" stroke-width="0.16" font-size="7.2">43</text>
<text x="209 213" y="493" fill="#000" stroke="#000" stroke-width="0.16" font-size="7.2">43</text>
<text x="248 252" y="497" fill="#800000" stroke="#800000" stroke-width="0.16" font-size="7.2">E5</text>
<text x="230 234" y="497" fill="#000" stroke="#000" stroke-width="0.16" font-size="7.2">44</text>
<text x="209 213" y="502" fill="#000" stroke="#000" stroke-width="0.16" font-size="7.2">44</text>
<text x="248 252" y="506" fill="#800000" stroke="#800000" stroke-width="0.16" font-size="7.2">E6</text>
<text x="230 234" y="506" fill="#000" stroke="#000" stroke-width="0.16" font-size="7.2">45</text>
<text x="209 213" y="510" fill="#000" stroke="#000" stroke-width="0.16" font-size="7.2">45</text>
<text x="248 252" y="514" fill="#800000" stroke="#800000" stroke-width="0.16" font-size="7.2">E7</text>
<text x="230 234" y="514" fill="#000" stroke="#000" stroke-width="0.16" font-size="7.2">46</text>
<text x="209 213" y="518" fill="#000" stroke="#000" stroke-width="0.16" font-size="7.2">46</text>
<text x="248 252" y="522" fill="#800000" stroke="#800000" stroke-width="0.16" font-size="7.2">E8</text>
<text x="230 234" y="522" fill="#000" stroke="#000" stroke-width="0.16" font-size="7.2">47</text>
<text x="209 213" y="526" fill="#000" stroke="#000" stroke-width="0.16" font-size="7.2">47</text>
<text x="248 252" y="531" fill="#800000" stroke="#800000" stroke-width="0.16" font-size="7.2">E9</text>
<text x="230 234" y="531" fill="#000" stroke="#000" stroke-width="0.16" font-size="7.2">48</text>
<text x="209 213" y="535" fill="#000" stroke="#000" stroke-width="0.16" font-size="7.2">48</text>
<text x="248 252 256" y="539" fill="#800000" stroke="#800000" stroke-width="0.16" font-size="7.2">E10</text>
<text x="230 234" y="539" fill="#000" stroke="#000" stroke-width="0.16" font-size="7.2">49</text>
<text x="209 213" y="543" fill="#000" stroke="#000" stroke-width="0.16" font-size="7.2">49</text>
<text x="248 253 258" y="547" fill="#800000" stroke="#800000" stroke-width="0.16" font-size="7.2">VCC</text>
<text x="230 234" y="547" fill="#000" stroke="#000" stroke-width="0.16" font-size="7.2">50</text>
<text x="209 213" y="551" fill="#000" stroke="#000" stroke-width="0.16" font-size="7.2">50</text>
<text x="248 253 258" y="555" fill="#800000" stroke="#800000" stroke-width="0.16" font-size="7.2">GND</text>
<text x="230 234" y="555" fill="#000" stroke="#000" stroke-width="0.16" font-size="7.2">51</text>
<text x="209 213" y="560" fill="#000" stroke="#000" stroke-width="0.16" font-size="7.2">51</text>
<path d="M88 356h2v1h-2z M88 361h2v1h-2z M113 356h2v1h-2z M113 361h2v1h-2z M117 356h2v1h-2z M117 361h2v1h-2z M245 356h2v1h-2z M245 361h2v1h-2z M88 364h2v1h-2z M88 369h2v1h-2z M113 364h2v1h-2z M113 369h2v1h-2z M117 364h2v1h-2z M117 369h2v1h-2z M245 364h2v1h-2z M245 369h2v1h-2z M88 372h2v1h-2z M88 377h2v1h-2z M113 372h2v1h-2z M113 377h2v1h-2z M117 372h2v1h-2z M117 377h2v1h-2z M245 372h2v1h-2z M245 377h2v1h-2z M88 381h2v1h-2z M88 386h2v1h-2z M113 381h2v1h-2z M113 386h2v1h-2z M117 381h2v1h-2z M117 386h2v1h-2z M245 381h2v1h-2z M245 386h2v1h-2z M88 389h2v1h-2z M88 394h2v1h-2z M113 389h2v1h-2z M113 394h2v1h-2z M117 389h2v1h-2z M117 394h2v1h-2z M245 389h2v1h-2z M245 394h2v1h-2z M88 397h2v1h-2z M88 402h2v1h-2z M113 397h2v1h-2z M113 402h2v1h-2z M117 397h2v1h-2z M117 402h2v1h-2z M245 397h2v1h-2z M245 402h2v1h-2z M88 405h2v1h-2z M88 410h2v1h-2z M113 405h2v1h-2z M113 410h2v1h-2z M117 405h2v1h-2z M117 410h2v1h-2z M245 405h2v1h-2z M245 410h2v1h-2z M88 414h2v1h-2z M88 419h2v1h-2z M113 414h2v1h-2z M113 419h2v1h-2z M117 414h2v1h-2z M117 419h2v1h-2z M245 414h2v1h-2z M245 419h2v1h-2z M88 422h2v1h-2z M88 427h2v1h-2z M113 422h2v1h-2z M113 427h2v1h-2z M117 422h2v1h-2z M117 427h2v1h-2z M245 422h2v1h-2z M245 427h2v1h-2z M88 430h2v1h-2z M88 435h2v1h-2z M113 430h2v1h-2z M113 435h2v1h-2z M117 430h2v1h-2z M117 435h2v1h-2z M245 430h2v1h-2z M245 435h2v1h-2z M88 439h2v1h-2z M88 444h2v1h-2z M113 439h2v1h-2z M113 444h2v1h-2z M117 439h2v1h-2z M117 444h2v1h-2z M245 439h2v1h-2z M245 444h2v1h-2z M88 447h2v1h-2z M88 452h2v1h-2z M113 447h2v1h-2z M113 452h2v1h-2z M117 447h2v1h-2z M117 452h2v1h-2z M245 447h2v1h-2z M245 452h2v1h-2z M88 455h2v1h-2z M88 460h2v1h-2z M113 455h2v1h-2z M113 460h2v1h-2z M117 455h2v1h-2z M117 460h2v1h-2z M245 455h2v1h-2z M245 460h2v1h-2z M88 463h2v1h-2z M88 468h2v1h-2z M113 463h2v1h-2z M113 468h2v1h-2z M117 463h2v1h-2z M117 468h2v1h-2z M245 463h2v1h-2z M245 468h2v1h-2z M88 472h2v1h-2z M88 477h2v1h-2z M113 472h2v1h-2z M113 477h2v1h-2z M117 472h2v1h-2z M117 477h2v1h-2z M245 472h2v1h-2z M245 477h2v1h-2z M88 480h2v1h-2z M88 485h2v1h-2z M113 480h2v1h-2z M113 485h2v1h-2z M117 480h2v1h-2z M117 485h2v1h-2z M245 480h2v1h-2z M245 485h2v1h-2z M88 488h2v1h-2z M88 493h2v1h-2z M113 488h2v1h-2z M113 493h2v1h-2z M117 488h2v1h-2z M117 493h2v1h-2z M245 488h2v1h-2z M245 493h2v1h-2z M88 496h2v1h-2z M88 501h2v1h-2z M113 496h2v1h-2z M113 501h2v1h-2z M117 496h2v1h-2z M117 501h2v1h-2z M245 496h2v1h-2z M245 501h2v1h-2z M88 505h2v1h-2z M88 510h2v1h-2z M113 505h2v1h-2z M113 510h2v1h-2z M117 505h2v1h-2z M117 510h2v1h-2z M245 505h2v1h-2z M245 510h2v1h-2z M88 513h2v1h-2z M88 518h2v1h-2z M113 513h2v1h-2z M113 518h2v1h-2z M117 513h2v1h-2z M117 518h2v1h-2z M245 513h2v1h-2z M245 518h2v1h-2z M88 521h2v1h-2z M88 526h2v1h-2z M113 521h2v1h-2z M113 526h2v1h-2z M117 521h2v1h-2z M117 526h2v1h-2z M245 521h2v1h-2z M245 526h2v1h-2z M88 530h2v1h-2z M88 535h2v1h-2z M113 530h2v1h-2z M113 535h2v1h-2z M117 530h2v1h-2z M117 535h2v1h-2z M245 530h2v1h-2z M245 535h2v1h-2z M88 538h2v1h-2z M88 543h2v1h-2z M113 538h2v1h-2z M113 543h2v1h-2z M117 538h2v1h-2z M117 543h2v1h-2z M245 538h2v1h-2z M245 543h2v1h-2z M88 546h2v1h-2z M88 551h2v1h-2z M113 546h2v1h-2z M113 551h2v1h-2z M117 546h2v1h-2z M117 551h2v1h-2z M245 546h2v1h-2z M245 551h2v1h-2z M88 554h2v1h-2z M88 559h2v1h-2z M113 554h2v1h-2z M113 559h2v1h-2z M117 554h2v1h-2z M117 559h2v1h-2z M245 554h2v1h-2z M245 559h2v1h-2z M88 563h2v1h-2z M88 568h2v1h-2z M113 563h2v1h-2z M113 568h2v1h-2z M117 563h2v1h-2z M117 568h2v1h-2z" fill="#e0e8f4"/>
<path d="M91 359.5H116 M91 367.5H116 M91 375.5H116 M91 384.5H116 M92 392.5H117 M91 400.5H116 M91 408.5H116 M91 417.5H116 M91 425.5H116 M91 433.5H116 M91 442.5H116 M91 450.5H116 M91 458.5H116 M91 466.5H116 M91 475.5H116 M91 483.5H116 M91 491.5H116 M91 499.5H116 M91 508.5H116 M91 516.5H116 M91 524.5H116 M91 533.5H116 M91 541.5H116 M91 549.5H116 M91 557.5H116 M91 566.5H116 M248 359.5H273 M248 367.5H273 M248 375.5H273 M248 384.5H273 M248 392.5H273 M248 400.5H273 M248 408.5H273 M248 417.5H273 M248 425.5H273 M248 433.5H273 M248 442.5H273 M248 450.5H273 M248 458.5H273 M248 466.5H273 M248 475.5H273 M248 483.5H273 M248 491.5H273 M248 499.5H273 M248 508.5H273 M248 516.5H273 M248 524.5H273 M248 533.5H273 M248 541.5H273 M248 549.5H273 M248 557.5H273" stroke="#000080" stroke-width="1" fill="none" shape-rendering="crispEdges"/>
<path d="M117 359.5H141.5 M117 367.5H141.5 M117 375.5H141.5 M117 384.5H141.5 M117 392.5H141.5 M117 400.5H141.5 M117 408.5H141.5 M117 417.5H141.5 M117 425.5H141.5 M117 433.5H141.5 M117 442.5H141.5 M117 450.5H141.5 M117 458.5H141.5 M117 466.5H141.5 M117 475.5H141.5 M117 483.5H141.5 M117 491.5H141.5 M117 499.5H141.5 M117 508.5H141.5 M117 516.5H141.5 M117 524.5H141.5 M117 533.5H141.5 M117 541.5H141.5 M117 549.5H141.5 M117 557.5H141.5 M117 566.5H141.5 M222.5 359.5H248 M222.5 367.5H248 M222.5 375.5H248 M222.5 384.5H248 M222.5 392.5H248 M222.5 400.5H248 M222.5 408.5H248 M222.5 417.5H248 M222.5 425.5H248 M222.5 433.5H248 M222.5 442.5H248 M222.5 450.5H248 M222.5 458.5H248 M222.5 466.5H248 M222.5 475.5H248 M222.5 483.5H248 M222.5 491.5H248 M222.5 499.5H248 M222.5 508.5H248 M222.5 516.5H248 M222.5 524.5H248 M222.5 533.5H248 M222.5 541.5H248 M222.5 549.5H248 M222.5 557.5H248" stroke="#000" stroke-width="1" fill="none" shape-rendering="crispEdges"/>
<text x="169 179 182 188 194 199" y="458" fill="#000080" stroke="#000080" stroke-width="0.1" font-size="12.3" font-weight="bold">Hirose</text>
<text x="141 146 148 150 154 157 160 164 168 171 173 177" y="339.7" fill="#000080" stroke="#000080" stroke-width="0.16" font-size="7.2">Hirose_baixo</text>
<text x="141 146 148 150 154 157" y="580" fill="#000080" stroke="#000080" stroke-width="0.16" font-size="7.2">Hirose</text>
<rect x="496.5" y="78.5" width="16" height="15" fill="#ffffb0" stroke="#800000" stroke-width="1" shape-rendering="crispEdges"/>
<text x="496 501" y="76" fill="#000080" stroke="#000080" stroke-width="0.16" font-size="7.2">A1</text>
<text x="504 509 514" y="92" fill="#800000" stroke="#800000" stroke-width="0.16" font-size="7.2">GND</text>
<rect x="521.5" y="78.5" width="16" height="15" fill="#ffffb0" stroke="#800000" stroke-width="1" shape-rendering="crispEdges"/>
<text x="521 526" y="76" fill="#000080" stroke="#000080" stroke-width="0.16" font-size="7.2">A2</text>
<text x="529 534" y="92" fill="#800000" stroke="#800000" stroke-width="0.16" font-size="7.2">A2</text>
<rect x="546.5" y="78.5" width="15" height="15" fill="#ffffb0" stroke="#800000" stroke-width="1" shape-rendering="crispEdges"/>
<text x="546 551" y="76" fill="#000080" stroke="#000080" stroke-width="0.16" font-size="7.2">A3</text>
<text x="554 559" y="92" fill="#800000" stroke="#800000" stroke-width="0.16" font-size="7.2">A3</text>
<rect x="571.5" y="78.5" width="15" height="15" fill="#ffffb0" stroke="#800000" stroke-width="1" shape-rendering="crispEdges"/>
<text x="571 576" y="76" fill="#000080" stroke="#000080" stroke-width="0.16" font-size="7.2">A4</text>
<text x="579 584" y="92" fill="#800000" stroke="#800000" stroke-width="0.16" font-size="7.2">A4</text>
<rect x="595.5" y="78.5" width="16" height="15" fill="#ffffb0" stroke="#800000" stroke-width="1" shape-rendering="crispEdges"/>
<text x="595 600" y="76" fill="#000080" stroke="#000080" stroke-width="0.16" font-size="7.2">A5</text>
<text x="604 609" y="92" fill="#800000" stroke="#800000" stroke-width="0.16" font-size="7.2">A5</text>
<rect x="620.5" y="78.5" width="16" height="15" fill="#ffffb0" stroke="#800000" stroke-width="1" shape-rendering="crispEdges"/>
<text x="620 625" y="76" fill="#000080" stroke="#000080" stroke-width="0.16" font-size="7.2">A6</text>
<text x="628 633" y="92" fill="#800000" stroke="#800000" stroke-width="0.16" font-size="7.2">A6</text>
<rect x="645.5" y="78.5" width="16" height="15" fill="#ffffb0" stroke="#800000" stroke-width="1" shape-rendering="crispEdges"/>
<text x="645 650" y="76" fill="#000080" stroke="#000080" stroke-width="0.16" font-size="7.2">A7</text>
<text x="653 658" y="92" fill="#800000" stroke="#800000" stroke-width="0.16" font-size="7.2">A7</text>
<rect x="670.5" y="78.5" width="15" height="15" fill="#ffffb0" stroke="#800000" stroke-width="1" shape-rendering="crispEdges"/>
<text x="670 675" y="76" fill="#000080" stroke="#000080" stroke-width="0.16" font-size="7.2">A8</text>
<text x="678 683" y="92" fill="#800000" stroke="#800000" stroke-width="0.16" font-size="7.2">A8</text>
<rect x="695.5" y="78.5" width="15" height="15" fill="#ffffb0" stroke="#800000" stroke-width="1" shape-rendering="crispEdges"/>
<text x="695 700" y="76" fill="#000080" stroke="#000080" stroke-width="0.16" font-size="7.2">A9</text>
<text x="703 708" y="92" fill="#800000" stroke="#800000" stroke-width="0.16" font-size="7.2">A9</text>
<rect x="719.5" y="78.5" width="16" height="15" fill="#ffffb0" stroke="#800000" stroke-width="1" shape-rendering="crispEdges"/>
<text x="719 724 728" y="76" fill="#000080" stroke="#000080" stroke-width="0.16" font-size="7.2">A10</text>
<text x="728 733 737" y="92" fill="#800000" stroke="#800000" stroke-width="0.16" font-size="7.2">A10</text>
<rect x="744.5" y="78.5" width="16" height="15" fill="#ffffb0" stroke="#800000" stroke-width="1" shape-rendering="crispEdges"/>
<text x="744 749 753" y="76" fill="#000080" stroke="#000080" stroke-width="0.16" font-size="7.2">A11</text>
<text x="753 758 762" y="92" fill="#800000" stroke="#800000" stroke-width="0.16" font-size="7.2">A11</text>
<rect x="769.5" y="78.5" width="16" height="15" fill="#ffffb0" stroke="#800000" stroke-width="1" shape-rendering="crispEdges"/>
<text x="769 774 778" y="76" fill="#000080" stroke="#000080" stroke-width="0.16" font-size="7.2">A12</text>
<text x="777 782 786" y="92" fill="#800000" stroke="#800000" stroke-width="0.16" font-size="7.2">A12</text>
<rect x="794.5" y="78.5" width="15" height="15" fill="#ffffb0" stroke="#800000" stroke-width="1" shape-rendering="crispEdges"/>
<text x="794 799 803" y="76" fill="#000080" stroke="#000080" stroke-width="0.16" font-size="7.2">A13</text>
<text x="802 807 811" y="92" fill="#800000" stroke="#800000" stroke-width="0.16" font-size="7.2">A13</text>
<rect x="819.5" y="78.5" width="15" height="15" fill="#ffffb0" stroke="#800000" stroke-width="1" shape-rendering="crispEdges"/>
<text x="819 824 828" y="76" fill="#000080" stroke="#000080" stroke-width="0.16" font-size="7.2">A14</text>
<text x="827 832 837" y="92" fill="#800000" stroke="#800000" stroke-width="0.16" font-size="7.2">GND</text>
<rect x="843.5" y="78.5" width="16" height="15" fill="#ffffb0" stroke="#800000" stroke-width="1" shape-rendering="crispEdges"/>
<text x="843 848 852" y="76" fill="#000080" stroke="#000080" stroke-width="0.16" font-size="7.2">A15</text>
<text x="852 857 861" y="92" fill="#800000" stroke="#800000" stroke-width="0.16" font-size="7.2">A15</text>
<rect x="868.5" y="78.5" width="16" height="15" fill="#ffffb0" stroke="#800000" stroke-width="1" shape-rendering="crispEdges"/>
<text x="868 873 877" y="76" fill="#000080" stroke="#000080" stroke-width="0.16" font-size="7.2">A16</text>
<text x="877 882 886" y="92" fill="#800000" stroke="#800000" stroke-width="0.16" font-size="7.2">A16</text>
<rect x="893.5" y="78.5" width="16" height="15" fill="#ffffb0" stroke="#800000" stroke-width="1" shape-rendering="crispEdges"/>
<text x="893 898 902" y="76" fill="#000080" stroke="#000080" stroke-width="0.16" font-size="7.2">A17</text>
<text x="901 906 910" y="92" fill="#800000" stroke="#800000" stroke-width="0.16" font-size="7.2">A17</text>
<rect x="496.5" y="136.5" width="16" height="15" fill="#ffffb0" stroke="#800000" stroke-width="1" shape-rendering="crispEdges"/>
<text x="496 501" y="134" fill="#000080" stroke="#000080" stroke-width="0.16" font-size="7.2">B1</text>
<text x="504 509 514" y="150" fill="#800000" stroke="#800000" stroke-width="0.16" font-size="7.2">GND</text>
<rect x="521.5" y="136.5" width="16" height="15" fill="#ffffb0" stroke="#800000" stroke-width="1" shape-rendering="crispEdges"/>
<text x="521 526" y="134" fill="#000080" stroke="#000080" stroke-width="0.16" font-size="7.2">B2</text>
<text x="529 534" y="150" fill="#800000" stroke="#800000" stroke-width="0.16" font-size="7.2">B2</text>
<rect x="546.5" y="136.5" width="15" height="15" fill="#ffffb0" stroke="#800000" stroke-width="1" shape-rendering="crispEdges"/>
<text x="546 551" y="134" fill="#000080" stroke="#000080" stroke-width="0.16" font-size="7.2">B3</text>
<text x="554 559" y="150" fill="#800000" stroke="#800000" stroke-width="0.16" font-size="7.2">B3</text>
<rect x="571.5" y="136.5" width="15" height="15" fill="#ffffb0" stroke="#800000" stroke-width="1" shape-rendering="crispEdges"/>
<text x="571 576" y="134" fill="#000080" stroke="#000080" stroke-width="0.16" font-size="7.2">B4</text>
<text x="579 584" y="150" fill="#800000" stroke="#800000" stroke-width="0.16" font-size="7.2">B4</text>
<rect x="595.5" y="136.5" width="16" height="15" fill="#ffffb0" stroke="#800000" stroke-width="1" shape-rendering="crispEdges"/>
<text x="595 600" y="134" fill="#000080" stroke="#000080" stroke-width="0.16" font-size="7.2">B5</text>
<text x="604 609" y="150" fill="#800000" stroke="#800000" stroke-width="0.16" font-size="7.2">B5</text>
<rect x="620.5" y="136.5" width="16" height="15" fill="#ffffb0" stroke="#800000" stroke-width="1" shape-rendering="crispEdges"/>
<text x="620 625" y="134" fill="#000080" stroke="#000080" stroke-width="0.16" font-size="7.2">B6</text>
<text x="628 633" y="150" fill="#800000" stroke="#800000" stroke-width="0.16" font-size="7.2">B6</text>
<rect x="645.5" y="136.5" width="16" height="15" fill="#ffffb0" stroke="#800000" stroke-width="1" shape-rendering="crispEdges"/>
<text x="645 650" y="134" fill="#000080" stroke="#000080" stroke-width="0.16" font-size="7.2">B7</text>
<text x="653 658" y="150" fill="#800000" stroke="#800000" stroke-width="0.16" font-size="7.2">B7</text>
<rect x="670.5" y="136.5" width="15" height="15" fill="#ffffb0" stroke="#800000" stroke-width="1" shape-rendering="crispEdges"/>
<text x="670 675" y="134" fill="#000080" stroke="#000080" stroke-width="0.16" font-size="7.2">B8</text>
<text x="678 683" y="150" fill="#800000" stroke="#800000" stroke-width="0.16" font-size="7.2">B8</text>
<rect x="695.5" y="136.5" width="15" height="15" fill="#ffffb0" stroke="#800000" stroke-width="1" shape-rendering="crispEdges"/>
<text x="695 700" y="134" fill="#000080" stroke="#000080" stroke-width="0.16" font-size="7.2">B9</text>
<text x="703 708" y="150" fill="#800000" stroke="#800000" stroke-width="0.16" font-size="7.2">B9</text>
<rect x="719.5" y="136.5" width="16" height="15" fill="#ffffb0" stroke="#800000" stroke-width="1" shape-rendering="crispEdges"/>
<text x="719 724 728" y="134" fill="#000080" stroke="#000080" stroke-width="0.16" font-size="7.2">B10</text>
<text x="728 733 737" y="150" fill="#800000" stroke="#800000" stroke-width="0.16" font-size="7.2">B10</text>
<rect x="744.5" y="136.5" width="16" height="15" fill="#ffffb0" stroke="#800000" stroke-width="1" shape-rendering="crispEdges"/>
<text x="744 749 753" y="134" fill="#000080" stroke="#000080" stroke-width="0.16" font-size="7.2">B11</text>
<text x="753 758 762" y="150" fill="#800000" stroke="#800000" stroke-width="0.16" font-size="7.2">B11</text>
<rect x="769.5" y="136.5" width="16" height="15" fill="#ffffb0" stroke="#800000" stroke-width="1" shape-rendering="crispEdges"/>
<text x="769 774 778" y="134" fill="#000080" stroke="#000080" stroke-width="0.16" font-size="7.2">B12</text>
<text x="777 782 786" y="150" fill="#800000" stroke="#800000" stroke-width="0.16" font-size="7.2">B12</text>
<rect x="794.5" y="136.5" width="15" height="15" fill="#ffffb0" stroke="#800000" stroke-width="1" shape-rendering="crispEdges"/>
<text x="794 799 803" y="134" fill="#000080" stroke="#000080" stroke-width="0.16" font-size="7.2">B13</text>
<text x="802 807 811" y="150" fill="#800000" stroke="#800000" stroke-width="0.16" font-size="7.2">B13</text>
<rect x="819.5" y="136.5" width="15" height="15" fill="#ffffb0" stroke="#800000" stroke-width="1" shape-rendering="crispEdges"/>
<text x="819 824 828" y="134" fill="#000080" stroke="#000080" stroke-width="0.16" font-size="7.2">B14</text>
<text x="827 832 837" y="150" fill="#800000" stroke="#800000" stroke-width="0.16" font-size="7.2">GND</text>
<rect x="843.5" y="136.5" width="16" height="15" fill="#ffffb0" stroke="#800000" stroke-width="1" shape-rendering="crispEdges"/>
<text x="843 848 852" y="134" fill="#000080" stroke="#000080" stroke-width="0.16" font-size="7.2">B15</text>
<text x="852 857 861" y="150" fill="#800000" stroke="#800000" stroke-width="0.16" font-size="7.2">B15</text>
<rect x="868.5" y="136.5" width="16" height="15" fill="#ffffb0" stroke="#800000" stroke-width="1" shape-rendering="crispEdges"/>
<text x="868 873 877" y="134" fill="#000080" stroke="#000080" stroke-width="0.16" font-size="7.2">B16</text>
<text x="877 882 886" y="150" fill="#800000" stroke="#800000" stroke-width="0.16" font-size="7.2">B16</text>
<rect x="893.5" y="136.5" width="16" height="15" fill="#ffffb0" stroke="#800000" stroke-width="1" shape-rendering="crispEdges"/>
<text x="893 898 902" y="134" fill="#000080" stroke="#000080" stroke-width="0.16" font-size="7.2">B17</text>
<text x="901 906 910" y="150" fill="#800000" stroke="#800000" stroke-width="0.16" font-size="7.2">B17</text>
<rect x="496.5" y="185.5" width="16" height="16" fill="#ffffb0" stroke="#800000" stroke-width="1" shape-rendering="crispEdges"/>
<text x="496 501" y="183" fill="#000080" stroke="#000080" stroke-width="0.16" font-size="7.2">C1</text>
<text x="504 509 514" y="199" fill="#800000" stroke="#800000" stroke-width="0.16" font-size="7.2">GND</text>
<rect x="521.5" y="185.5" width="16" height="16" fill="#ffffb0" stroke="#800000" stroke-width="1" shape-rendering="crispEdges"/>
<text x="521 526" y="183" fill="#000080" stroke="#000080" stroke-width="0.16" font-size="7.2">C2</text>
<text x="529 534" y="199" fill="#800000" stroke="#800000" stroke-width="0.16" font-size="7.2">C2</text>
<rect x="546.5" y="185.5" width="15" height="16" fill="#ffffb0" stroke="#800000" stroke-width="1" shape-rendering="crispEdges"/>
<text x="546 551" y="183" fill="#000080" stroke="#000080" stroke-width="0.16" font-size="7.2">C3</text>
<text x="554 559" y="199" fill="#800000" stroke="#800000" stroke-width="0.16" font-size="7.2">C3</text>
<rect x="571.5" y="185.5" width="15" height="16" fill="#ffffb0" stroke="#800000" stroke-width="1" shape-rendering="crispEdges"/>
<text x="571 576" y="183" fill="#000080" stroke="#000080" stroke-width="0.16" font-size="7.2">C4</text>
<text x="579 584" y="199" fill="#800000" stroke="#800000" stroke-width="0.16" font-size="7.2">C4</text>
<rect x="595.5" y="185.5" width="16" height="16" fill="#ffffb0" stroke="#800000" stroke-width="1" shape-rendering="crispEdges"/>
<text x="595 600" y="183" fill="#000080" stroke="#000080" stroke-width="0.16" font-size="7.2">C5</text>
<text x="604 609" y="199" fill="#800000" stroke="#800000" stroke-width="0.16" font-size="7.2">C5</text>
<rect x="620.5" y="185.5" width="16" height="16" fill="#ffffb0" stroke="#800000" stroke-width="1" shape-rendering="crispEdges"/>
<text x="620 625" y="183" fill="#000080" stroke="#000080" stroke-width="0.16" font-size="7.2">C6</text>
<text x="628 633" y="199" fill="#800000" stroke="#800000" stroke-width="0.16" font-size="7.2">C6</text>
<rect x="645.5" y="185.5" width="16" height="16" fill="#ffffb0" stroke="#800000" stroke-width="1" shape-rendering="crispEdges"/>
<text x="645 650" y="183" fill="#000080" stroke="#000080" stroke-width="0.16" font-size="7.2">C7</text>
<text x="653 658" y="199" fill="#800000" stroke="#800000" stroke-width="0.16" font-size="7.2">C7</text>
<rect x="670.5" y="185.5" width="15" height="16" fill="#ffffb0" stroke="#800000" stroke-width="1" shape-rendering="crispEdges"/>
<text x="670 675" y="183" fill="#000080" stroke="#000080" stroke-width="0.16" font-size="7.2">C8</text>
<text x="678 683" y="199" fill="#800000" stroke="#800000" stroke-width="0.16" font-size="7.2">C8</text>
<rect x="695.5" y="185.5" width="15" height="16" fill="#ffffb0" stroke="#800000" stroke-width="1" shape-rendering="crispEdges"/>
<text x="695 700" y="183" fill="#000080" stroke="#000080" stroke-width="0.16" font-size="7.2">C9</text>
<text x="703 708" y="199" fill="#800000" stroke="#800000" stroke-width="0.16" font-size="7.2">C9</text>
<rect x="719.5" y="185.5" width="16" height="16" fill="#ffffb0" stroke="#800000" stroke-width="1" shape-rendering="crispEdges"/>
<text x="719 724 728" y="183" fill="#000080" stroke="#000080" stroke-width="0.16" font-size="7.2">C10</text>
<text x="728 733 737" y="199" fill="#800000" stroke="#800000" stroke-width="0.16" font-size="7.2">C10</text>
<rect x="744.5" y="185.5" width="16" height="16" fill="#ffffb0" stroke="#800000" stroke-width="1" shape-rendering="crispEdges"/>
<text x="744 749 753" y="183" fill="#000080" stroke="#000080" stroke-width="0.16" font-size="7.2">C11</text>
<text x="753 758 762" y="199" fill="#800000" stroke="#800000" stroke-width="0.16" font-size="7.2">C11</text>
<rect x="769.5" y="185.5" width="16" height="16" fill="#ffffb0" stroke="#800000" stroke-width="1" shape-rendering="crispEdges"/>
<text x="769 774 778" y="183" fill="#000080" stroke="#000080" stroke-width="0.16" font-size="7.2">C12</text>
<text x="777 782 786" y="199" fill="#800000" stroke="#800000" stroke-width="0.16" font-size="7.2">C12</text>
<rect x="794.5" y="185.5" width="15" height="16" fill="#ffffb0" stroke="#800000" stroke-width="1" shape-rendering="crispEdges"/>
<text x="794 799 803" y="183" fill="#000080" stroke="#000080" stroke-width="0.16" font-size="7.2">C13</text>
<text x="802 807 811" y="199" fill="#800000" stroke="#800000" stroke-width="0.16" font-size="7.2">C13</text>
<rect x="819.5" y="185.5" width="15" height="16" fill="#ffffb0" stroke="#800000" stroke-width="1" shape-rendering="crispEdges"/>
<text x="819 824 828" y="183" fill="#000080" stroke="#000080" stroke-width="0.16" font-size="7.2">C14</text>
<text x="827 832 837" y="199" fill="#800000" stroke="#800000" stroke-width="0.16" font-size="7.2">GND</text>
<rect x="843.5" y="185.5" width="16" height="16" fill="#ffffb0" stroke="#800000" stroke-width="1" shape-rendering="crispEdges"/>
<text x="843 848 852" y="183" fill="#000080" stroke="#000080" stroke-width="0.16" font-size="7.2">C15</text>
<text x="852 857 861" y="199" fill="#800000" stroke="#800000" stroke-width="0.16" font-size="7.2">C15</text>
<rect x="868.5" y="185.5" width="16" height="16" fill="#ffffb0" stroke="#800000" stroke-width="1" shape-rendering="crispEdges"/>
<text x="868 873 877" y="183" fill="#000080" stroke="#000080" stroke-width="0.16" font-size="7.2">C16</text>
<text x="877 882 886" y="199" fill="#800000" stroke="#800000" stroke-width="0.16" font-size="7.2">C16</text>
<rect x="893.5" y="185.5" width="16" height="16" fill="#ffffb0" stroke="#800000" stroke-width="1" shape-rendering="crispEdges"/>
<text x="893 898 902" y="183" fill="#000080" stroke="#000080" stroke-width="0.16" font-size="7.2">C17</text>
<text x="901 906 910" y="199" fill="#800000" stroke="#800000" stroke-width="0.16" font-size="7.2">C17</text>
<rect x="496.5" y="235.5" width="16" height="15" fill="#ffffb0" stroke="#800000" stroke-width="1" shape-rendering="crispEdges"/>
<text x="496 501" y="233" fill="#000080" stroke="#000080" stroke-width="0.16" font-size="7.2">D1</text>
<text x="504 509 514" y="249" fill="#800000" stroke="#800000" stroke-width="0.16" font-size="7.2">VCC</text>
<rect x="521.5" y="235.5" width="16" height="15" fill="#ffffb0" stroke="#800000" stroke-width="1" shape-rendering="crispEdges"/>
<text x="521 526" y="233" fill="#000080" stroke="#000080" stroke-width="0.16" font-size="7.2">D2</text>
<text x="529 534" y="249" fill="#800000" stroke="#800000" stroke-width="0.16" font-size="7.2">D2</text>
<rect x="546.5" y="235.5" width="15" height="15" fill="#ffffb0" stroke="#800000" stroke-width="1" shape-rendering="crispEdges"/>
<text x="546 551" y="233" fill="#000080" stroke="#000080" stroke-width="0.16" font-size="7.2">D3</text>
<text x="554 559" y="249" fill="#800000" stroke="#800000" stroke-width="0.16" font-size="7.2">D3</text>
<rect x="571.5" y="235.5" width="15" height="15" fill="#ffffb0" stroke="#800000" stroke-width="1" shape-rendering="crispEdges"/>
<text x="571 576" y="233" fill="#000080" stroke="#000080" stroke-width="0.16" font-size="7.2">D4</text>
<text x="579 584" y="249" fill="#800000" stroke="#800000" stroke-width="0.16" font-size="7.2">D4</text>
<rect x="595.5" y="235.5" width="16" height="15" fill="#ffffb0" stroke="#800000" stroke-width="1" shape-rendering="crispEdges"/>
<text x="595 600" y="233" fill="#000080" stroke="#000080" stroke-width="0.16" font-size="7.2">D5</text>
<text x="604 609" y="249" fill="#800000" stroke="#800000" stroke-width="0.16" font-size="7.2">D5</text>
<rect x="620.5" y="235.5" width="16" height="15" fill="#ffffb0" stroke="#800000" stroke-width="1" shape-rendering="crispEdges"/>
<text x="620 625" y="233" fill="#000080" stroke="#000080" stroke-width="0.16" font-size="7.2">D6</text>
<text x="628 633" y="249" fill="#800000" stroke="#800000" stroke-width="0.16" font-size="7.2">D6</text>
<rect x="645.5" y="235.5" width="16" height="15" fill="#ffffb0" stroke="#800000" stroke-width="1" shape-rendering="crispEdges"/>
<text x="645 650" y="233" fill="#000080" stroke="#000080" stroke-width="0.16" font-size="7.2">D7</text>
<text x="653 658" y="249" fill="#800000" stroke="#800000" stroke-width="0.16" font-size="7.2">D7</text>
<rect x="670.5" y="235.5" width="15" height="15" fill="#ffffb0" stroke="#800000" stroke-width="1" shape-rendering="crispEdges"/>
<text x="670 675" y="233" fill="#000080" stroke="#000080" stroke-width="0.16" font-size="7.2">D8</text>
<text x="678 683" y="249" fill="#800000" stroke="#800000" stroke-width="0.16" font-size="7.2">D8</text>
<rect x="695.5" y="235.5" width="15" height="15" fill="#ffffb0" stroke="#800000" stroke-width="1" shape-rendering="crispEdges"/>
<text x="695 700" y="233" fill="#000080" stroke="#000080" stroke-width="0.16" font-size="7.2">D9</text>
<text x="703 708" y="249" fill="#800000" stroke="#800000" stroke-width="0.16" font-size="7.2">D9</text>
<rect x="719.5" y="235.5" width="16" height="15" fill="#ffffb0" stroke="#800000" stroke-width="1" shape-rendering="crispEdges"/>
<text x="719 724 728" y="233" fill="#000080" stroke="#000080" stroke-width="0.16" font-size="7.2">D10</text>
<text x="728 733 737" y="249" fill="#800000" stroke="#800000" stroke-width="0.16" font-size="7.2">D10</text>
<rect x="744.5" y="235.5" width="16" height="15" fill="#ffffb0" stroke="#800000" stroke-width="1" shape-rendering="crispEdges"/>
<text x="744 749 753" y="233" fill="#000080" stroke="#000080" stroke-width="0.16" font-size="7.2">D11</text>
<text x="753 758 762" y="249" fill="#800000" stroke="#800000" stroke-width="0.16" font-size="7.2">D11</text>
<rect x="769.5" y="235.5" width="16" height="15" fill="#ffffb0" stroke="#800000" stroke-width="1" shape-rendering="crispEdges"/>
<text x="769 774 778" y="233" fill="#000080" stroke="#000080" stroke-width="0.16" font-size="7.2">D12</text>
<text x="777 782 786" y="249" fill="#800000" stroke="#800000" stroke-width="0.16" font-size="7.2">D12</text>
<rect x="794.5" y="235.5" width="15" height="15" fill="#ffffb0" stroke="#800000" stroke-width="1" shape-rendering="crispEdges"/>
<text x="794 799 803" y="233" fill="#000080" stroke="#000080" stroke-width="0.16" font-size="7.2">D13</text>
<text x="802 807 811" y="249" fill="#800000" stroke="#800000" stroke-width="0.16" font-size="7.2">D13</text>
<rect x="819.5" y="235.5" width="15" height="15" fill="#ffffb0" stroke="#800000" stroke-width="1" shape-rendering="crispEdges"/>
<text x="819 824 828" y="233" fill="#000080" stroke="#000080" stroke-width="0.16" font-size="7.2">D14</text>
<text x="827 832 837" y="249" fill="#800000" stroke="#800000" stroke-width="0.16" font-size="7.2">VCC</text>
<rect x="843.5" y="235.5" width="16" height="15" fill="#ffffb0" stroke="#800000" stroke-width="1" shape-rendering="crispEdges"/>
<text x="843 848 852" y="233" fill="#000080" stroke="#000080" stroke-width="0.16" font-size="7.2">D15</text>
<text x="852 857 861" y="249" fill="#800000" stroke="#800000" stroke-width="0.16" font-size="7.2">D15</text>
<rect x="868.5" y="235.5" width="16" height="15" fill="#ffffb0" stroke="#800000" stroke-width="1" shape-rendering="crispEdges"/>
<text x="868 873 877" y="233" fill="#000080" stroke="#000080" stroke-width="0.16" font-size="7.2">D16</text>
<text x="877 882 886" y="249" fill="#800000" stroke="#800000" stroke-width="0.16" font-size="7.2">D16</text>
<rect x="893.5" y="235.5" width="16" height="15" fill="#ffffb0" stroke="#800000" stroke-width="1" shape-rendering="crispEdges"/>
<text x="893 898 902" y="233" fill="#000080" stroke="#000080" stroke-width="0.16" font-size="7.2">D17</text>
<text x="901 906 910" y="249" fill="#800000" stroke="#800000" stroke-width="0.16" font-size="7.2">D17</text>
<rect x="496.5" y="293.5" width="16" height="15" fill="#ffffb0" stroke="#800000" stroke-width="1" shape-rendering="crispEdges"/>
<text x="496 500" y="291" fill="#000080" stroke="#000080" stroke-width="0.16" font-size="7.2">E1</text>
<text x="504 509 514" y="307" fill="#800000" stroke="#800000" stroke-width="0.16" font-size="7.2">VCC</text>
<rect x="521.5" y="293.5" width="16" height="15" fill="#ffffb0" stroke="#800000" stroke-width="1" shape-rendering="crispEdges"/>
<text x="521 525" y="291" fill="#000080" stroke="#000080" stroke-width="0.16" font-size="7.2">E2</text>
<text x="529 533" y="307" fill="#800000" stroke="#800000" stroke-width="0.16" font-size="7.2">E2</text>
<rect x="546.5" y="293.5" width="15" height="15" fill="#ffffb0" stroke="#800000" stroke-width="1" shape-rendering="crispEdges"/>
<text x="546 550" y="291" fill="#000080" stroke="#000080" stroke-width="0.16" font-size="7.2">E3</text>
<text x="554 558" y="307" fill="#800000" stroke="#800000" stroke-width="0.16" font-size="7.2">E3</text>
<rect x="571.5" y="293.5" width="15" height="15" fill="#ffffb0" stroke="#800000" stroke-width="1" shape-rendering="crispEdges"/>
<text x="571 575" y="291" fill="#000080" stroke="#000080" stroke-width="0.16" font-size="7.2">E4</text>
<text x="579 583" y="307" fill="#800000" stroke="#800000" stroke-width="0.16" font-size="7.2">E4</text>
<rect x="595.5" y="293.5" width="16" height="15" fill="#ffffb0" stroke="#800000" stroke-width="1" shape-rendering="crispEdges"/>
<text x="595 599" y="291" fill="#000080" stroke="#000080" stroke-width="0.16" font-size="7.2">E5</text>
<text x="604 608" y="307" fill="#800000" stroke="#800000" stroke-width="0.16" font-size="7.2">E5</text>
<rect x="620.5" y="293.5" width="16" height="15" fill="#ffffb0" stroke="#800000" stroke-width="1" shape-rendering="crispEdges"/>
<text x="620 624" y="291" fill="#000080" stroke="#000080" stroke-width="0.16" font-size="7.2">E6</text>
<text x="628 632" y="307" fill="#800000" stroke="#800000" stroke-width="0.16" font-size="7.2">E6</text>
<rect x="645.5" y="293.5" width="16" height="15" fill="#ffffb0" stroke="#800000" stroke-width="1" shape-rendering="crispEdges"/>
<text x="645 649" y="291" fill="#000080" stroke="#000080" stroke-width="0.16" font-size="7.2">E7</text>
<text x="653 657" y="307" fill="#800000" stroke="#800000" stroke-width="0.16" font-size="7.2">E7</text>
<rect x="670.5" y="293.5" width="15" height="15" fill="#ffffb0" stroke="#800000" stroke-width="1" shape-rendering="crispEdges"/>
<text x="670 674" y="291" fill="#000080" stroke="#000080" stroke-width="0.16" font-size="7.2">E8</text>
<text x="678 682" y="307" fill="#800000" stroke="#800000" stroke-width="0.16" font-size="7.2">E8</text>
<rect x="695.5" y="293.5" width="15" height="15" fill="#ffffb0" stroke="#800000" stroke-width="1" shape-rendering="crispEdges"/>
<text x="695 699" y="291" fill="#000080" stroke="#000080" stroke-width="0.16" font-size="7.2">E9</text>
<text x="703 707" y="307" fill="#800000" stroke="#800000" stroke-width="0.16" font-size="7.2">E9</text>
<rect x="719.5" y="293.5" width="16" height="15" fill="#ffffb0" stroke="#800000" stroke-width="1" shape-rendering="crispEdges"/>
<text x="719 723 727" y="291" fill="#000080" stroke="#000080" stroke-width="0.16" font-size="7.2">E10</text>
<text x="728 732 736" y="307" fill="#800000" stroke="#800000" stroke-width="0.16" font-size="7.2">E10</text>
<rect x="744.5" y="293.5" width="16" height="15" fill="#ffffb0" stroke="#800000" stroke-width="1" shape-rendering="crispEdges"/>
<text x="744 748 752" y="291" fill="#000080" stroke="#000080" stroke-width="0.16" font-size="7.2">E11</text>
<text x="753 757 761" y="307" fill="#800000" stroke="#800000" stroke-width="0.16" font-size="7.2">E11</text>
<rect x="769.5" y="293.5" width="16" height="15" fill="#ffffb0" stroke="#800000" stroke-width="1" shape-rendering="crispEdges"/>
<text x="769 773 777" y="291" fill="#000080" stroke="#000080" stroke-width="0.16" font-size="7.2">E12</text>
<text x="777 781 785" y="307" fill="#800000" stroke="#800000" stroke-width="0.16" font-size="7.2">E12</text>
<rect x="794.5" y="293.5" width="15" height="15" fill="#ffffb0" stroke="#800000" stroke-width="1" shape-rendering="crispEdges"/>
<text x="794 798 802" y="291" fill="#000080" stroke="#000080" stroke-width="0.16" font-size="7.2">E13</text>
<text x="802 806 810" y="307" fill="#800000" stroke="#800000" stroke-width="0.16" font-size="7.2">E13</text>
<rect x="819.5" y="293.5" width="15" height="15" fill="#ffffb0" stroke="#800000" stroke-width="1" shape-rendering="crispEdges"/>
<text x="819 823 827" y="291" fill="#000080" stroke="#000080" stroke-width="0.16" font-size="7.2">E14</text>
<text x="827 832 837" y="307" fill="#800000" stroke="#800000" stroke-width="0.16" font-size="7.2">VCC</text>
<rect x="843.5" y="293.5" width="16" height="15" fill="#ffffb0" stroke="#800000" stroke-width="1" shape-rendering="crispEdges"/>
<text x="843 847 851" y="291" fill="#000080" stroke="#000080" stroke-width="0.16" font-size="7.2">E15</text>
<text x="852 856 860" y="307" fill="#800000" stroke="#800000" stroke-width="0.16" font-size="7.2">E15</text>
<rect x="868.5" y="293.5" width="16" height="15" fill="#ffffb0" stroke="#800000" stroke-width="1" shape-rendering="crispEdges"/>
<text x="868 872 876" y="291" fill="#000080" stroke="#000080" stroke-width="0.16" font-size="7.2">E16</text>
<text x="877 881 885" y="307" fill="#800000" stroke="#800000" stroke-width="0.16" font-size="7.2">E16</text>
<rect x="893.5" y="293.5" width="16" height="15" fill="#ffffb0" stroke="#800000" stroke-width="1" shape-rendering="crispEdges"/>
<text x="893 897 901" y="291" fill="#000080" stroke="#000080" stroke-width="0.16" font-size="7.2">E17</text>
<text x="901 905 909" y="307" fill="#800000" stroke="#800000" stroke-width="0.16" font-size="7.2">E17</text>
<rect x="496.5" y="359.5" width="16" height="15" fill="#ffffb0" stroke="#800000" stroke-width="1" shape-rendering="crispEdges"/>
<text x="496 500" y="357" fill="#000080" stroke="#000080" stroke-width="0.16" font-size="7.2">F1</text>
<text transform="translate(502,375) rotate(-90)" fill="#800000" stroke="#800000" stroke-width="0.16" font-size="7.2">VCC</text>
<rect x="521.5" y="359.5" width="16" height="15" fill="#ffffb0" stroke="#800000" stroke-width="1" shape-rendering="crispEdges"/>
<text x="521 525" y="357" fill="#000080" stroke="#000080" stroke-width="0.16" font-size="7.2">F2</text>
<text x="529 533" y="373" fill="#800000" stroke="#800000" stroke-width="0.16" font-size="7.2">F2</text>
<rect x="546.5" y="359.5" width="15" height="15" fill="#ffffb0" stroke="#800000" stroke-width="1" shape-rendering="crispEdges"/>
<text x="546 550" y="357" fill="#000080" stroke="#000080" stroke-width="0.16" font-size="7.2">F3</text>
<text x="554 558" y="373" fill="#800000" stroke="#800000" stroke-width="0.16" font-size="7.2">F3</text>
<rect x="571.5" y="359.5" width="15" height="15" fill="#ffffb0" stroke="#800000" stroke-width="1" shape-rendering="crispEdges"/>
<text x="571 575" y="357" fill="#000080" stroke="#000080" stroke-width="0.16" font-size="7.2">F4</text>
<text x="579 583" y="373" fill="#800000" stroke="#800000" stroke-width="0.16" font-size="7.2">F4</text>
<rect x="595.5" y="359.5" width="16" height="15" fill="#ffffb0" stroke="#800000" stroke-width="1" shape-rendering="crispEdges"/>
<text x="595 599" y="357" fill="#000080" stroke="#000080" stroke-width="0.16" font-size="7.2">F5</text>
<text x="604 608" y="373" fill="#800000" stroke="#800000" stroke-width="0.16" font-size="7.2">F5</text>
<rect x="620.5" y="359.5" width="16" height="15" fill="#ffffb0" stroke="#800000" stroke-width="1" shape-rendering="crispEdges"/>
<text x="620 624" y="357" fill="#000080" stroke="#000080" stroke-width="0.16" font-size="7.2">F6</text>
<text x="628 632" y="373" fill="#800000" stroke="#800000" stroke-width="0.16" font-size="7.2">F6</text>
<rect x="645.5" y="359.5" width="16" height="15" fill="#ffffb0" stroke="#800000" stroke-width="1" shape-rendering="crispEdges"/>
<text x="645 649" y="357" fill="#000080" stroke="#000080" stroke-width="0.16" font-size="7.2">F7</text>
<text x="653 657" y="373" fill="#800000" stroke="#800000" stroke-width="0.16" font-size="7.2">F7</text>
<rect x="670.5" y="359.5" width="15" height="15" fill="#ffffb0" stroke="#800000" stroke-width="1" shape-rendering="crispEdges"/>
<text x="670 674" y="357" fill="#000080" stroke="#000080" stroke-width="0.16" font-size="7.2">F8</text>
<text x="678 682" y="373" fill="#800000" stroke="#800000" stroke-width="0.16" font-size="7.2">F8</text>
<rect x="695.5" y="359.5" width="15" height="15" fill="#ffffb0" stroke="#800000" stroke-width="1" shape-rendering="crispEdges"/>
<text x="695 699" y="357" fill="#000080" stroke="#000080" stroke-width="0.16" font-size="7.2">F9</text>
<text x="703 707" y="373" fill="#800000" stroke="#800000" stroke-width="0.16" font-size="7.2">F9</text>
<rect x="719.5" y="359.5" width="16" height="15" fill="#ffffb0" stroke="#800000" stroke-width="1" shape-rendering="crispEdges"/>
<text x="719 723 727" y="357" fill="#000080" stroke="#000080" stroke-width="0.16" font-size="7.2">F10</text>
<text x="728 732 736" y="373" fill="#800000" stroke="#800000" stroke-width="0.16" font-size="7.2">F10</text>
<rect x="744.5" y="359.5" width="16" height="15" fill="#ffffb0" stroke="#800000" stroke-width="1" shape-rendering="crispEdges"/>
<text x="744 748 752" y="357" fill="#000080" stroke="#000080" stroke-width="0.16" font-size="7.2">F11</text>
<text x="753 757 761" y="373" fill="#800000" stroke="#800000" stroke-width="0.16" font-size="7.2">F11</text>
<rect x="769.5" y="359.5" width="16" height="15" fill="#ffffb0" stroke="#800000" stroke-width="1" shape-rendering="crispEdges"/>
<text x="769 773 777" y="357" fill="#000080" stroke="#000080" stroke-width="0.16" font-size="7.2">F12</text>
<text x="777 781 785" y="373" fill="#800000" stroke="#800000" stroke-width="0.16" font-size="7.2">F12</text>
<rect x="794.5" y="359.5" width="15" height="15" fill="#ffffb0" stroke="#800000" stroke-width="1" shape-rendering="crispEdges"/>
<text x="794 798 802" y="357" fill="#000080" stroke="#000080" stroke-width="0.16" font-size="7.2">F13</text>
<text x="802 806 810" y="373" fill="#800000" stroke="#800000" stroke-width="0.16" font-size="7.2">F13</text>
<rect x="819.5" y="359.5" width="15" height="15" fill="#ffffb0" stroke="#800000" stroke-width="1" shape-rendering="crispEdges"/>
<text x="819 823 827" y="357" fill="#000080" stroke="#000080" stroke-width="0.16" font-size="7.2">F14</text>
<text x="827 832 837" y="373" fill="#800000" stroke="#800000" stroke-width="0.16" font-size="7.2">VCC</text>
<rect x="843.5" y="359.5" width="16" height="15" fill="#ffffb0" stroke="#800000" stroke-width="1" shape-rendering="crispEdges"/>
<text x="843 847 851" y="357" fill="#000080" stroke="#000080" stroke-width="0.16" font-size="7.2">F15</text>
<text x="852 856 860" y="373" fill="#800000" stroke="#800000" stroke-width="0.16" font-size="7.2">F15</text>
<rect x="868.5" y="359.5" width="16" height="15" fill="#ffffb0" stroke="#800000" stroke-width="1" shape-rendering="crispEdges"/>
<text x="868 872 876" y="357" fill="#000080" stroke="#000080" stroke-width="0.16" font-size="7.2">F16</text>
<text x="877 881 885" y="373" fill="#800000" stroke="#800000" stroke-width="0.16" font-size="7.2">F16</text>
<rect x="893.5" y="359.5" width="16" height="15" fill="#ffffb0" stroke="#800000" stroke-width="1" shape-rendering="crispEdges"/>
<text x="893 897 901" y="357" fill="#000080" stroke="#000080" stroke-width="0.16" font-size="7.2">F17</text>
<text x="901 905 909" y="373" fill="#800000" stroke="#800000" stroke-width="0.16" font-size="7.2">F17</text>
<path d="M504.5 95V120 M529.5 95V120 M554.5 95V120 M579.5 95V120 M604.5 95V120 M628.5 95V120 M653.5 95V120 M678.5 95V120 M703.5 95V120 M728.5 95V120 M753.5 95V120 M777.5 95V120 M802.5 95V120 M827.5 95V120 M852.5 95V120 M877.5 95V120 M901.5 95V120 M504.5 153V178 M529.5 153V178 M554.5 153V178 M579.5 153V178 M604.5 153V178 M628.5 153V178 M653.5 153V178 M678.5 153V178 M703.5 153V178 M728.5 153V178 M753.5 153V178 M777.5 153V178 M802.5 153V178 M827.5 153V178 M852.5 153V178 M877.5 153V178 M901.5 153V178 M504.5 203V228 M529.5 203V228 M554.5 203V228 M579.5 203V228 M604.5 203V228 M628.5 203V228 M653.5 203V228 M678.5 203V228 M703.5 203V228 M728.5 203V228 M753.5 203V228 M777.5 203V228 M802.5 203V228 M827.5 203V228 M852.5 203V228 M877.5 203V228 M901.5 203V228 M504.5 252V277 M529.5 252V277 M554.5 252V277 M579.5 252V277 M604.5 252V277 M628.5 252V277 M653.5 252V277 M678.5 252V277 M703.5 252V277 M728.5 252V277 M753.5 252V277 M777.5 252V277 M802.5 252V277 M827.5 252V277 M852.5 252V277 M877.5 252V277 M901.5 252V277 M504.5 310V335 M529.5 310V335 M554.5 310V335 M579.5 310V335 M604.5 310V335 M628.5 310V335 M653.5 310V335 M678.5 310V335 M703.5 310V335 M728.5 310V335 M753.5 310V335 M777.5 310V335 M802.5 310V335 M827.5 310V335 M852.5 310V335 M877.5 310V335 M901.5 310V335 M504.5 376V401 M529.5 376V401 M554.5 376V401 M579.5 376V401 M604.5 376V401 M628.5 376V401 M653.5 376V401 M678.5 376V401 M703.5 376V401 M728.5 376V401 M753.5 376V401 M777.5 376V401 M802.5 376V401 M827.5 376V401 M852.5 376V401 M877.5 376V401 M901.5 376V401" stroke="#000" stroke-width="1" fill="none" shape-rendering="crispEdges"/>
<path d="M497 110.5H502 M522 110.5H527 M547 110.5H552 M572 110.5H577 M596 110.5H601 M621 110.5H626 M646 110.5H651 M671 110.5H676 M696 110.5H701 M720 110.5H725 M745 110.5H750 M770 110.5H775 M795 110.5H800 M820 110.5H825 M844 110.5H849 M869 110.5H874 M894 110.5H899 M497 168.5H502 M503 127.5H507 M522 168.5H527 M527 127.5H531 M547 168.5H552 M552 127.5H556 M572 168.5H577 M577 127.5H581 M596 168.5H601 M602 127.5H606 M621 168.5H626 M627 127.5H631 M646 168.5H651 M651 127.5H655 M671 168.5H676 M676 127.5H680 M696 168.5H701 M701 127.5H705 M720 168.5H725 M726 127.5H730 M745 168.5H750 M751 127.5H755 M770 168.5H775 M775 127.5H779 M795 168.5H800 M800 127.5H804 M820 168.5H825 M825 127.5H829 M844 168.5H849 M850 127.5H854 M869 168.5H874 M875 127.5H879 M894 168.5H899 M900 127.5H904 M497 218.5H502 M503 185.5H507 M522 218.5H527 M527 185.5H531 M547 218.5H552 M552 185.5H556 M572 218.5H577 M577 185.5H581 M596 218.5H601 M602 185.5H606 M621 218.5H626 M627 185.5H631 M646 218.5H651 M651 185.5H655 M671 218.5H676 M676 185.5H680 M696 218.5H701 M701 185.5H705 M720 218.5H725 M726 185.5H730 M745 218.5H750 M751 185.5H755 M770 218.5H775 M775 185.5H779 M795 218.5H800 M800 185.5H804 M820 218.5H825 M825 185.5H829 M844 218.5H849 M850 185.5H854 M869 218.5H874 M875 185.5H879 M894 218.5H899 M900 185.5H904 M497 268.5H502 M503 235.5H507 M522 268.5H527 M527 235.5H531 M547 268.5H552 M552 235.5H556 M572 268.5H577 M577 235.5H581 M596 268.5H601 M602 235.5H606 M621 268.5H626 M627 235.5H631 M646 268.5H651 M651 235.5H655 M671 268.5H676 M676 235.5H680 M696 268.5H701 M701 235.5H705 M720 268.5H725 M726 235.5H730 M745 268.5H750 M751 235.5H755 M770 268.5H775 M775 235.5H779 M795 268.5H800 M800 235.5H804 M820 268.5H825 M825 235.5H829 M844 268.5H849 M850 235.5H854 M869 268.5H874 M875 235.5H879 M894 268.5H899 M900 235.5H904 M497 325.5H502 M503 284.5H507 M522 325.5H527 M527 284.5H531 M547 325.5H552 M552 284.5H556 M572 325.5H577 M577 284.5H581 M596 325.5H601 M602 284.5H606 M621 325.5H626 M627 284.5H631 M646 325.5H651 M651 284.5H655 M671 325.5H676 M676 284.5H680 M696 325.5H701 M701 284.5H705 M720 325.5H725 M726 284.5H730 M745 325.5H750 M751 284.5H755 M770 325.5H775 M775 284.5H779 M795 325.5H800 M800 284.5H804 M820 325.5H825 M825 284.5H829 M844 325.5H849 M850 284.5H854 M869 325.5H874 M875 284.5H879 M894 325.5H899 M900 284.5H904 M497 392.5H502 M503 342.5H507 M503 408.5H507 M522 392.5H527 M527 342.5H531 M527 408.5H531 M547 392.5H552 M552 342.5H556 M552 408.5H556 M572 392.5H577 M577 342.5H581 M577 408.5H581 M596 392.5H601 M602 342.5H606 M602 408.5H606 M621 392.5H626 M627 342.5H631 M627 408.5H631 M646 392.5H651 M651 342.5H655 M651 408.5H655 M671 392.5H676 M676 342.5H680 M676 408.5H680 M696 392.5H701 M701 342.5H705 M701 408.5H705 M720 392.5H725 M726 342.5H730 M726 408.5H730 M745 392.5H750 M751 342.5H755 M751 408.5H755 M770 392.5H775 M775 342.5H779 M775 408.5H779 M795 392.5H800 M800 342.5H804 M800 408.5H804 M820 392.5H825 M825 342.5H829 M825 408.5H829 M844 392.5H849 M850 342.5H854 M850 408.5H854 M869 392.5H874 M875 342.5H879 M875 408.5H879 M894 392.5H899 M900 342.5H904 M900 408.5H904" stroke="#000" stroke-width="1" fill="none" shape-rendering="crispEdges"/>
<path d="M501 91h2v1h-2z M505 91h2v1h-2z M501 95h2v1h-2z M505 95h2v1h-2z M526 91h2v1h-2z M530 91h2v1h-2z M526 95h2v1h-2z M530 95h2v1h-2z M551 91h2v1h-2z M555 91h2v1h-2z M551 95h2v1h-2z M555 95h2v1h-2z M576 91h2v1h-2z M580 91h2v1h-2z M576 95h2v1h-2z M580 95h2v1h-2z M601 91h2v1h-2z M605 91h2v1h-2z M601 95h2v1h-2z M605 95h2v1h-2z M625 91h2v1h-2z M629 91h2v1h-2z M625 95h2v1h-2z M629 95h2v1h-2z M650 91h2v1h-2z M654 91h2v1h-2z M650 95h2v1h-2z M654 95h2v1h-2z M675 91h2v1h-2z M679 91h2v1h-2z M675 95h2v1h-2z M679 95h2v1h-2z M700 91h2v1h-2z M704 91h2v1h-2z M700 95h2v1h-2z M704 95h2v1h-2z M725 91h2v1h-2z M729 91h2v1h-2z M725 95h2v1h-2z M729 95h2v1h-2z M750 91h2v1h-2z M754 91h2v1h-2z M750 95h2v1h-2z M754 95h2v1h-2z M774 91h2v1h-2z M778 91h2v1h-2z M774 95h2v1h-2z M778 95h2v1h-2z M799 91h2v1h-2z M803 91h2v1h-2z M799 95h2v1h-2z M803 95h2v1h-2z M824 91h2v1h-2z M828 91h2v1h-2z M824 95h2v1h-2z M828 95h2v1h-2z M849 91h2v1h-2z M853 91h2v1h-2z M849 95h2v1h-2z M853 95h2v1h-2z M874 91h2v1h-2z M878 91h2v1h-2z M874 95h2v1h-2z M878 95h2v1h-2z M898 91h2v1h-2z M902 91h2v1h-2z M898 95h2v1h-2z M902 95h2v1h-2z M501 149h2v1h-2z M505 149h2v1h-2z M501 153h2v1h-2z M505 153h2v1h-2z M526 149h2v1h-2z M530 149h2v1h-2z M526 153h2v1h-2z M530 153h2v1h-2z M551 149h2v1h-2z M555 149h2v1h-2z M551 153h2v1h-2z M555 153h2v1h-2z M576 149h2v1h-2z M580 149h2v1h-2z M576 153h2v1h-2z M580 153h2v1h-2z M601 149h2v1h-2z M605 149h2v1h-2z M601 153h2v1h-2z M605 153h2v1h-2z M625 149h2v1h-2z M629 149h2v1h-2z M625 153h2v1h-2z M629 153h2v1h-2z M650 149h2v1h-2z M654 149h2v1h-2z M650 153h2v1h-2z M654 153h2v1h-2z M675 149h2v1h-2z M679 149h2v1h-2z M675 153h2v1h-2z M679 153h2v1h-2z M700 149h2v1h-2z M704 149h2v1h-2z M700 153h2v1h-2z M704 153h2v1h-2z M725 149h2v1h-2z M729 149h2v1h-2z M725 153h2v1h-2z M729 153h2v1h-2z M750 149h2v1h-2z M754 149h2v1h-2z M750 153h2v1h-2z M754 153h2v1h-2z M774 149h2v1h-2z M778 149h2v1h-2z M774 153h2v1h-2z M778 153h2v1h-2z M799 149h2v1h-2z M803 149h2v1h-2z M799 153h2v1h-2z M803 153h2v1h-2z M824 149h2v1h-2z M828 149h2v1h-2z M824 153h2v1h-2z M828 153h2v1h-2z M849 149h2v1h-2z M853 149h2v1h-2z M849 153h2v1h-2z M853 153h2v1h-2z M874 149h2v1h-2z M878 149h2v1h-2z M874 153h2v1h-2z M878 153h2v1h-2z M898 149h2v1h-2z M902 149h2v1h-2z M898 153h2v1h-2z M902 153h2v1h-2z M501 199h2v1h-2z M505 199h2v1h-2z M501 203h2v1h-2z M505 203h2v1h-2z M526 199h2v1h-2z M530 199h2v1h-2z M526 203h2v1h-2z M530 203h2v1h-2z M551 199h2v1h-2z M555 199h2v1h-2z M551 203h2v1h-2z M555 203h2v1h-2z M576 199h2v1h-2z M580 199h2v1h-2z M576 203h2v1h-2z M580 203h2v1h-2z M601 199h2v1h-2z M605 199h2v1h-2z M601 203h2v1h-2z M605 203h2v1h-2z M625 199h2v1h-2z M629 199h2v1h-2z M625 203h2v1h-2z M629 203h2v1h-2z M650 199h2v1h-2z M654 199h2v1h-2z M650 203h2v1h-2z M654 203h2v1h-2z M675 199h2v1h-2z M679 199h2v1h-2z M675 203h2v1h-2z M679 203h2v1h-2z M700 199h2v1h-2z M704 199h2v1h-2z M700 203h2v1h-2z M704 203h2v1h-2z M725 199h2v1h-2z M729 199h2v1h-2z M725 203h2v1h-2z M729 203h2v1h-2z M750 199h2v1h-2z M754 199h2v1h-2z M750 203h2v1h-2z M754 203h2v1h-2z M774 199h2v1h-2z M778 199h2v1h-2z M774 203h2v1h-2z M778 203h2v1h-2z M799 199h2v1h-2z M803 199h2v1h-2z M799 203h2v1h-2z M803 203h2v1h-2z M824 199h2v1h-2z M828 199h2v1h-2z M824 203h2v1h-2z M828 203h2v1h-2z M849 199h2v1h-2z M853 199h2v1h-2z M849 203h2v1h-2z M853 203h2v1h-2z M874 199h2v1h-2z M878 199h2v1h-2z M874 203h2v1h-2z M878 203h2v1h-2z M898 199h2v1h-2z M902 199h2v1h-2z M898 203h2v1h-2z M902 203h2v1h-2z M501 248h2v1h-2z M505 248h2v1h-2z M501 252h2v1h-2z M505 252h2v1h-2z M526 248h2v1h-2z M530 248h2v1h-2z M526 252h2v1h-2z M530 252h2v1h-2z M551 248h2v1h-2z M555 248h2v1h-2z M551 252h2v1h-2z M555 252h2v1h-2z M576 248h2v1h-2z M580 248h2v1h-2z M576 252h2v1h-2z M580 252h2v1h-2z M601 248h2v1h-2z M605 248h2v1h-2z M601 252h2v1h-2z M605 252h2v1h-2z M625 248h2v1h-2z M629 248h2v1h-2z M625 252h2v1h-2z M629 252h2v1h-2z M650 248h2v1h-2z M654 248h2v1h-2z M650 252h2v1h-2z M654 252h2v1h-2z M675 248h2v1h-2z M679 248h2v1h-2z M675 252h2v1h-2z M679 252h2v1h-2z M700 248h2v1h-2z M704 248h2v1h-2z M700 252h2v1h-2z M704 252h2v1h-2z M725 248h2v1h-2z M729 248h2v1h-2z M725 252h2v1h-2z M729 252h2v1h-2z M750 248h2v1h-2z M754 248h2v1h-2z M750 252h2v1h-2z M754 252h2v1h-2z M774 248h2v1h-2z M778 248h2v1h-2z M774 252h2v1h-2z M778 252h2v1h-2z M799 248h2v1h-2z M803 248h2v1h-2z M799 252h2v1h-2z M803 252h2v1h-2z M824 248h2v1h-2z M828 248h2v1h-2z M824 252h2v1h-2z M828 252h2v1h-2z M849 248h2v1h-2z M853 248h2v1h-2z M849 252h2v1h-2z M853 252h2v1h-2z M874 248h2v1h-2z M878 248h2v1h-2z M874 252h2v1h-2z M878 252h2v1h-2z M898 248h2v1h-2z M902 248h2v1h-2z M898 252h2v1h-2z M902 252h2v1h-2z M501 306h2v1h-2z M505 306h2v1h-2z M501 310h2v1h-2z M505 310h2v1h-2z M526 306h2v1h-2z M530 306h2v1h-2z M526 310h2v1h-2z M530 310h2v1h-2z M551 306h2v1h-2z M555 306h2v1h-2z M551 310h2v1h-2z M555 310h2v1h-2z M576 306h2v1h-2z M580 306h2v1h-2z M576 310h2v1h-2z M580 310h2v1h-2z M601 306h2v1h-2z M605 306h2v1h-2z M601 310h2v1h-2z M605 310h2v1h-2z M625 306h2v1h-2z M629 306h2v1h-2z M625 310h2v1h-2z M629 310h2v1h-2z M650 306h2v1h-2z M654 306h2v1h-2z M650 310h2v1h-2z M654 310h2v1h-2z M675 306h2v1h-2z M679 306h2v1h-2z M675 310h2v1h-2z M679 310h2v1h-2z M700 306h2v1h-2z M704 306h2v1h-2z M700 310h2v1h-2z M704 310h2v1h-2z M725 306h2v1h-2z M729 306h2v1h-2z M725 310h2v1h-2z M729 310h2v1h-2z M750 306h2v1h-2z M754 306h2v1h-2z M750 310h2v1h-2z M754 310h2v1h-2z M774 306h2v1h-2z M778 306h2v1h-2z M774 310h2v1h-2z M778 310h2v1h-2z M799 306h2v1h-2z M803 306h2v1h-2z M799 310h2v1h-2z M803 310h2v1h-2z M824 306h2v1h-2z M828 306h2v1h-2z M824 310h2v1h-2z M828 310h2v1h-2z M849 306h2v1h-2z M853 306h2v1h-2z M849 310h2v1h-2z M853 310h2v1h-2z M874 306h2v1h-2z M878 306h2v1h-2z M874 310h2v1h-2z M878 310h2v1h-2z M898 306h2v1h-2z M902 306h2v1h-2z M898 310h2v1h-2z M902 310h2v1h-2z M501 372h2v1h-2z M505 372h2v1h-2z M501 376h2v1h-2z M505 376h2v1h-2z M526 372h2v1h-2z M530 372h2v1h-2z M526 376h2v1h-2z M530 376h2v1h-2z M551 372h2v1h-2z M555 372h2v1h-2z M551 376h2v1h-2z M555 376h2v1h-2z M576 372h2v1h-2z M580 372h2v1h-2z M576 376h2v1h-2z M580 376h2v1h-2z M601 372h2v1h-2z M605 372h2v1h-2z M601 376h2v1h-2z M605 376h2v1h-2z M625 372h2v1h-2z M629 372h2v1h-2z M625 376h2v1h-2z M629 376h2v1h-2z M650 372h2v1h-2z M654 372h2v1h-2z M650 376h2v1h-2z M654 376h2v1h-2z M675 372h2v1h-2z M679 372h2v1h-2z M675 376h2v1h-2z M679 376h2v1h-2z M700 372h2v1h-2z M704 372h2v1h-2z M700 376h2v1h-2z M704 376h2v1h-2z M725 372h2v1h-2z M729 372h2v1h-2z M725 376h2v1h-2z M729 376h2v1h-2z M750 372h2v1h-2z M754 372h2v1h-2z M750 376h2v1h-2z M754 376h2v1h-2z M774 372h2v1h-2z M778 372h2v1h-2z M774 376h2v1h-2z M778 376h2v1h-2z M799 372h2v1h-2z M803 372h2v1h-2z M799 376h2v1h-2z M803 376h2v1h-2z M824 372h2v1h-2z M828 372h2v1h-2z M824 376h2v1h-2z M828 376h2v1h-2z M849 372h2v1h-2z M853 372h2v1h-2z M849 376h2v1h-2z M853 376h2v1h-2z M874 372h2v1h-2z M878 372h2v1h-2z M874 376h2v1h-2z M878 376h2v1h-2z M898 372h2v1h-2z M902 372h2v1h-2z M898 376h2v1h-2z M902 376h2v1h-2z" fill="#e0e8f4"/>
<path d="M645.5 549.5H933 M645.5 549.5V616 M645.5 574.5H933 M645.5 599.5H933 M645.5 607.5H933 M686.5 574.5V599.5 M852.5 574.5V599.5 M810.5 599.5V616" stroke="#000" stroke-width="1" fill="none" shape-rendering="crispEdges"/>
<text x="649 653 655 657 659" y="554.8" fill="#000" stroke="#000" stroke-width="0.16" font-size="7.2">Title</text>
<text x="649 653 655 658" y="579.8" fill="#000" stroke="#000" stroke-width="0.16" font-size="7.2">Size</text>
<text x="653 658" y="592" fill="#000" stroke="#000" stroke-width="0.16" font-size="7.2">A4</text>
<text x="691 696 700 705 709 712" y="579.8" fill="#000" stroke="#000" stroke-width="0.16" font-size="7.2">Number</text>
<text x="856 861 864 868 870 873 875 879" y="579.8" fill="#000" stroke="#000" stroke-width="0.16" font-size="7.2">Revision</text>
<text x="649 654 657 659 662" y="605" fill="#000" stroke="#000" stroke-width="0.16" font-size="7.2">Date:</text>
<text x="686 690 694 696 700 704 706 710 714 718" y="605" fill="#000" stroke="#000" stroke-width="0.16" font-size="7.2">14-04-2011</text>
<text x="649 653 655 657 660" y="613" fill="#000" stroke="#000" stroke-width="0.16" font-size="7.2">File:</text>
<text x="686 691 693 695 700 703 706 708 711 713 715 717 719 723 727 730 733 735 739 741 745 748 752 757 761" y="613" fill="#000" stroke="#000" stroke-width="0.16" font-size="7.2">C:\Users\..\Sheet1.SchDoc</text>
<text x="815 819 823 826 829 831 833 835 837 839 843" y="605" fill="#000" stroke="#000" stroke-width="0.16" font-size="7.2" xml:space="preserve">Sheet    of</text>
<text x="815 820 822 825 830 834 836 841 845" y="613" fill="#000" stroke="#000" stroke-width="0.16" font-size="7.2">Drawn By:</text>
</g>
</svg></body></html>
